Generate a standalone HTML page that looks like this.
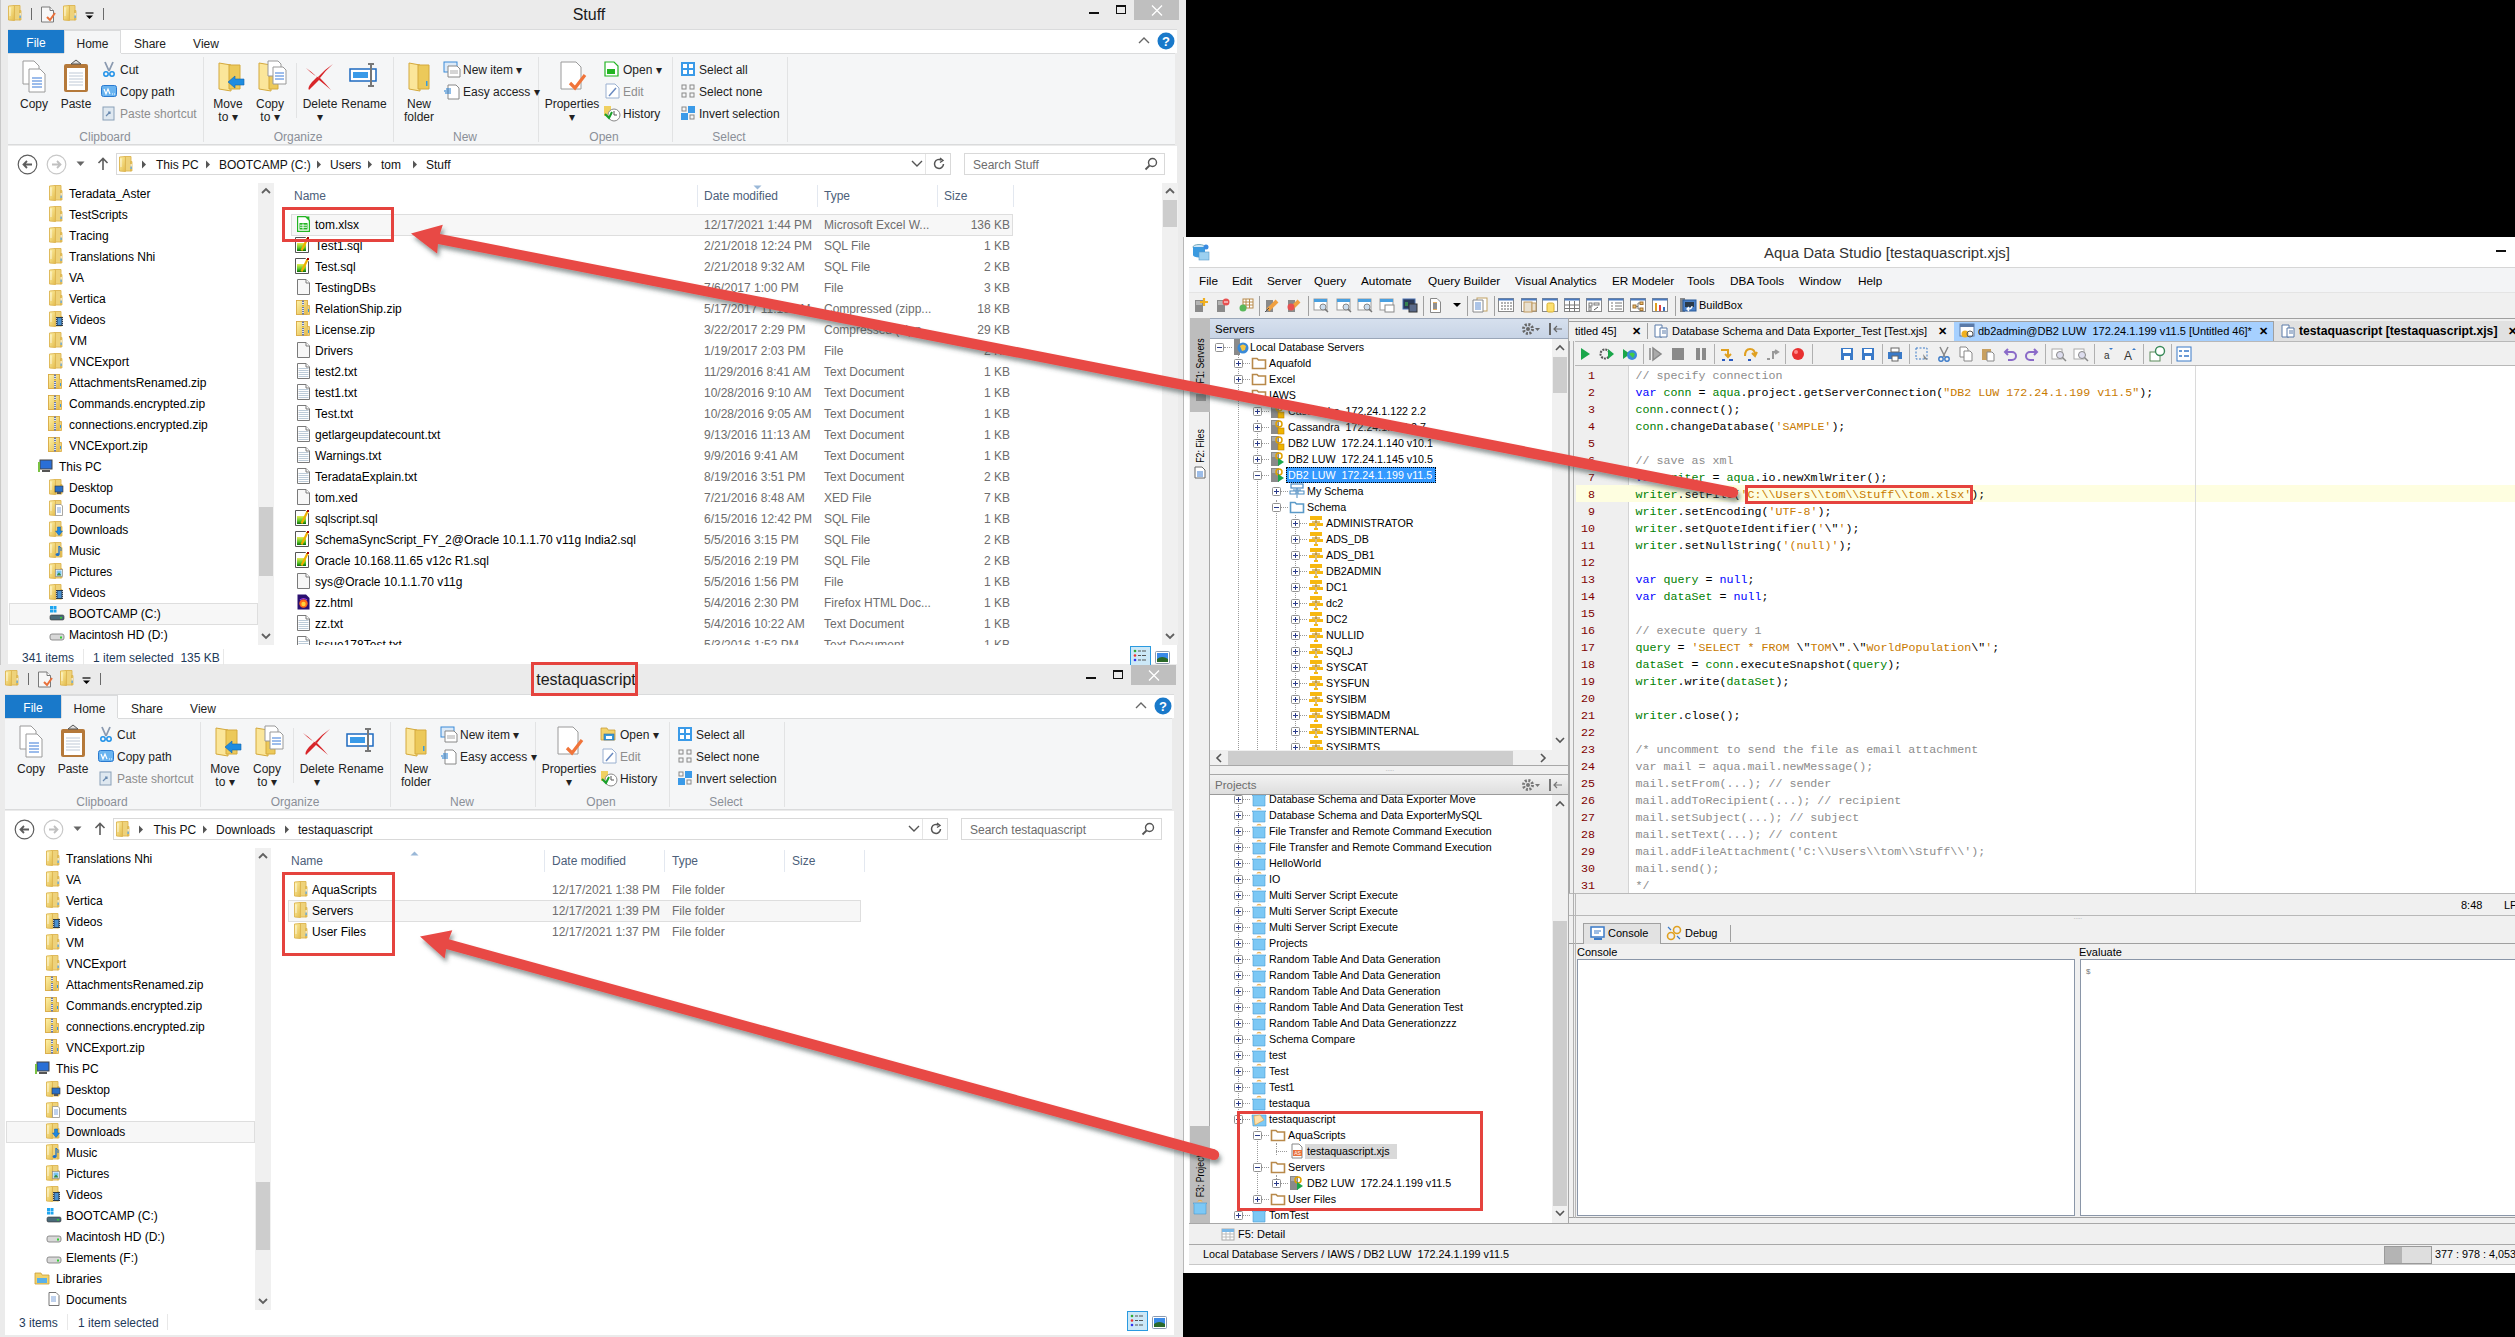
<!DOCTYPE html><html><head><meta charset="utf-8"><style>
html,body{margin:0;padding:0;}
body{width:2515px;height:1337px;overflow:hidden;position:relative;background:#000;font-family:"Liberation Sans",sans-serif;}
body div, body svg{position:absolute;}
.t{white-space:pre;}
svg{overflow:visible;}
</style></head><body>

<svg width="0" height="0" style="position:absolute">
<defs>
<linearGradient id="gfold" x1="0" y1="0" x2="1" y2="1"><stop offset="0" stop-color="#fff3a8"/><stop offset="1" stop-color="#e2b94a"/></linearGradient>
<linearGradient id="gsql" x1="0" y1="0" x2="0" y2="1"><stop offset="0" stop-color="#e8ec50"/><stop offset="0.6" stop-color="#5cc82a"/><stop offset="1" stop-color="#0a6a0a"/></linearGradient>
<symbol id="efoldb" viewBox="0 0 16 16" overflow="visible"><path d="M5.5 0.5 H12 V15 H5.5 Z" fill="#eed27a" stroke="#dcb450" stroke-width="0.9"/><path d="M11.5 5.5 H13 V15 H11.5 Z" fill="#e6c456" stroke="#dcb450" stroke-width="0.8"/><path d="M0.5 1 L6.5 0.5 V15.5 L0.5 15 Z" fill="url(#gfold)" stroke="#dcb450" stroke-width="0.9"/><path d="M2 2.5 V11" stroke="#fff" stroke-width="0.9" opacity="0.8"/></symbol>
<symbol id="efold" viewBox="0 0 16 16" overflow="visible"><use href="#efoldb"/><rect x="11.6" y="8" width="1" height="5" fill="#fff"/><rect x="11.6" y="10.5" width="1" height="2.5" fill="#2a8ad8"/></symbol>
<symbol id="fdesk" viewBox="0 0 16 16" overflow="visible"><use href="#efoldb"/><rect x="6" y="7" width="8" height="6" fill="#2a70c8" stroke="#333" stroke-width="0.6"/><rect x="8" y="13" width="4" height="2" fill="#555"/></symbol>
<symbol id="fdocs" viewBox="0 0 16 16" overflow="visible"><use href="#efoldb"/><path d="M6.5 4.5 H12 L13.5 6 V15.5 H6.5 Z" fill="#fff" stroke="#888" stroke-width="0.7"/><path d="M8 8h4M8 10h4M8 12h4" stroke="#5a8ad0" stroke-width="0.8"/></symbol>
<symbol id="fdl" viewBox="0 0 16 16" overflow="visible"><use href="#efoldb"/><path d="M8.5 6 H11.5 V10 H13.5 L10 14.5 L6.5 10 H8.5 Z" fill="#1e88e0" stroke="#0f5aa8" stroke-width="0.5"/></symbol>
<symbol id="fmusic" viewBox="0 0 16 16" overflow="visible"><use href="#efoldb"/><path d="M10 4 V12" stroke="#1e70c8" stroke-width="1.3"/><ellipse cx="8.6" cy="12.5" rx="2" ry="1.6" fill="#1e70c8"/><path d="M10 4 Q13 6 12 9" stroke="#1e70c8" fill="none"/></symbol>
<symbol id="fpics" viewBox="0 0 16 16" overflow="visible"><use href="#efoldb"/><rect x="6.5" y="6.5" width="7" height="7" fill="#fff" stroke="#888" stroke-width="0.7"/><rect x="7.5" y="7.5" width="5" height="5" fill="#7ac4f0"/><path d="M7.5 12.5 L10 9.5 L12.5 12.5 Z" fill="#3a8a3a"/></symbol>
<symbol id="fvid" viewBox="0 0 16 16" overflow="visible"><use href="#efoldb"/><rect x="7" y="6" width="7" height="9" fill="#2a3a4a"/><rect x="8.5" y="7" width="4" height="7" fill="#4a90d0"/><path d="M7.5 7v7M13.5 7v7" stroke="#ddd" stroke-width="0.8" stroke-dasharray="1 1"/></symbol>
<symbol id="ezip" viewBox="0 0 16 16" overflow="visible"><rect x="-0.5" y="0.5" width="11" height="14" fill="url(#gfold)" stroke="#d8a840" stroke-width="0.9"/><path d="M10.5 5.5 H12.5 V14.5 H10.5" fill="#f0d27a" stroke="#d8a840" stroke-width="0.8"/><rect x="11" y="9" width="1" height="3" fill="#3a9ad9"/><rect x="5" y="0.5" width="2" height="14" fill="#6a7aa8"/><path d="M5 2.5h2M5 4.5h2M5 6.5h2M5 8.5h2M5 10.5h2M5 12.5h2" stroke="#fff" stroke-width="0.8"/><circle cx="6" cy="6" r="0.9" fill="#f0c020"/></symbol>
<symbol id="efile" viewBox="0 0 16 16" overflow="visible"><path d="M0.5 0.5 H9 L12.5 4 V15.5 H0.5 Z" fill="#f7f7f7" stroke="#7a7a7a"/><path d="M9 0.5 V4 H12.5" fill="#fff" stroke="#7a7a7a"/></symbol>
<symbol id="etxt" viewBox="0 0 16 16" overflow="visible"><path d="M0.5 0.5 H9 L12.5 4 V15.5 H0.5 Z" fill="#fff" stroke="#7a7a7a"/><path d="M9 0.5 V4 H12.5" fill="#fff" stroke="#7a7a7a"/><path d="M1.5 5.5h10M1.5 7.5h10M1.5 9.5h10M1.5 11.5h10M1.5 13.5h10" stroke="#bccbd8"/></symbol>
<symbol id="esql" viewBox="0 0 16 16" overflow="visible"><path d="M-1.5 0.5 H8.5 L11.5 3.5 V15.5 H-1.5 Z" fill="#fff" stroke="#555"/><rect x="0" y="6" width="9" height="8" fill="url(#gsql)"/><path d="M4.5 13.5 L10.5 1.5" stroke="#f0b000" stroke-width="2.2"/><rect x="10" y="0" width="2" height="2" fill="#a00"/></symbol>
<symbol id="exlsx" viewBox="0 0 16 16" overflow="visible"><path d="M0.6 0.6 H8.5 L12.4 4.5 V15.4 H0.6 Z" fill="#fff" stroke="#22b422" stroke-width="1.2"/><path d="M8.5 0.6 L12.4 0.6 L12.4 4.5 Z" fill="#22b422"/><rect x="2.5" y="7" width="8" height="6.5" fill="#22b422"/><path d="M3 9.2h7M3 11.3h7M6 7.5v6" stroke="#fff" stroke-width="0.9"/></symbol>
<symbol id="ehtml" viewBox="0 0 16 16" overflow="visible"><path d="M0.5 0.5 H9 L12.5 4 V15.5 H0.5 Z" fill="#2a1070"/><circle cx="6.5" cy="9.5" r="4.2" fill="#ff6a1a"/><circle cx="6.5" cy="10" r="2.2" fill="#ffd23a"/><path d="M3 6 Q6.5 3 10 6" stroke="#a040e0" stroke-width="1.2" fill="none"/></symbol>
<symbol id="epc" viewBox="0 0 16 16"><rect x="3" y="2" width="12" height="9" fill="#2a6fd6" stroke="#444" stroke-width="1"/><rect x="1" y="4" width="2" height="10" fill="#7ac142"/><rect x="5" y="12" width="8" height="2" fill="#555"/></symbol>
<symbol id="edrivec" viewBox="0 0 16 16"><rect x="1" y="1" width="3" height="3" fill="#1ea5f0"/><rect x="4.5" y="1" width="3" height="3" fill="#1ea5f0"/><rect x="1" y="4.5" width="3" height="3" fill="#1ea5f0"/><rect x="4.5" y="4.5" width="3" height="3" fill="#1ea5f0"/><rect x="1" y="10" width="14" height="5" rx="1.5" fill="#4a6a7a" stroke="#333" stroke-width="0.6"/><rect x="11" y="12" width="2" height="1.5" fill="#3c3"/></symbol>
<symbol id="edrive" viewBox="0 0 16 16"><rect x="1" y="8" width="14" height="6" rx="2" fill="#d8d8d8" stroke="#777" stroke-width="0.8"/><rect x="11" y="10.5" width="2" height="2" fill="#3c3"/></symbol>
<symbol id="elib" viewBox="0 0 16 16"><path d="M1 3 H7 L8 5 H15 V14 H1 Z" fill="#f3d36b" stroke="#c9a03a" stroke-width="0.8"/><rect x="3" y="8" width="10" height="5" fill="#5ab0e8"/></symbol>
<symbol id="ldoc" viewBox="0 0 16 16"><path d="M3 1.5 H10 L13 4.5 V14.5 H3 Z" fill="#fff" stroke="#666" stroke-width="0.9"/><path d="M5 6h5M5 8h5M5 10h5" stroke="#5a8ad0" stroke-width="0.8"/></symbol>
<symbol id="afold" viewBox="0 0 16 16"><path d="M1.5 3.5 H6 L7.5 5 H14.5 V13.5 H1.5 Z" fill="#fff" stroke="#b8894a" stroke-width="1.6"/></symbol>
<symbol id="afoldb" viewBox="0 0 16 16"><path d="M1.5 3.5 H6 L7.5 5 H14.5 V13.5 H1.5 Z" fill="#fff" stroke="#5b9ac8" stroke-width="1.6"/></symbol>
<symbol id="pfold" viewBox="0 0 16 16"><path d="M6 2.5 a2 1.2 0 0 1 4 0" fill="#ffd27a" stroke="#e0a040" stroke-width="0.8"/><path d="M1 4 H15 L14 5 V15 H2 V5 Z" fill="#7cc8f5" stroke="#4a9ad0" stroke-width="0.6"/></symbol>
<symbol id="pfoldo" viewBox="0 0 16 16"><path d="M1 4 H15 V15 H2 Z" fill="#7cc8f5" stroke="#4a9ad0" stroke-width="0.6"/><path d="M3 5 L9 4 L13 9 L4 14 Z" fill="#ffe0a8" stroke="#e0a040" stroke-width="0.6"/></symbol>
<symbol id="srv" viewBox="0 0 16 16"><rect x="1" y="1" width="8" height="14" fill="#8a8a8a"/><path d="M2 3h6M2 5h6" stroke="#ddd" stroke-width="0.8"/><circle cx="9" cy="5" r="3" fill="none" stroke="#e0a000" stroke-width="1.5"/><rect x="8" y="9" width="6" height="6" fill="#f0b400" stroke="#c08000" stroke-width="0.6"/></symbol>
<symbol id="srvg" viewBox="0 0 16 16"><rect x="1" y="1" width="8" height="14" fill="#8a8a8a"/><path d="M2 3h6M2 5h6" stroke="#ddd" stroke-width="0.8"/><circle cx="9" cy="5" r="3" fill="none" stroke="#e0a000" stroke-width="1.5"/><path d="M8 7 L14 11 L8 15 Z" fill="#1aa64a"/></symbol>
<symbol id="globe" viewBox="0 0 16 16"><rect x="1" y="0" width="6" height="16" fill="#8a8a8a"/><circle cx="10" cy="9" r="5.5" fill="#3a8ad8"/><path d="M7 7 Q10 4 13 7 L12 11 L9 12 Z" fill="#f5c542"/></symbol>
<symbol id="schm" viewBox="0 0 16 16"><rect x="2" y="1" width="12" height="4" fill="#f7b80f"/><rect x="1" y="8" width="6" height="3" fill="#f7b80f"/><rect x="9" y="8" width="6" height="3" fill="#f7b80f"/><path d="M8 5v10M4 7h8" stroke="#b07a00" stroke-width="1"/><rect x="6" y="13" width="4" height="2" fill="#f7b80f"/></symbol>
<symbol id="schmb" viewBox="0 0 16 16"><rect x="2" y="1" width="12" height="4" fill="none" stroke="#4a8ac0" stroke-width="1.2"/><rect x="1" y="8" width="6" height="3" fill="none" stroke="#4a8ac0"/><rect x="9" y="8" width="6" height="3" fill="none" stroke="#4a8ac0"/><path d="M8 5v10M4 7h8" stroke="#4a8ac0" stroke-width="1"/></symbol>
<symbol id="xplus" viewBox="0 0 9 9"><rect x="0.5" y="0.5" width="8" height="8" rx="1" fill="#fff" stroke="#919191"/><path d="M2 4.5h5M4.5 2v5" stroke="#2a3a8a" stroke-width="1"/></symbol>
<symbol id="xminus" viewBox="0 0 9 9"><rect x="0.5" y="0.5" width="8" height="8" rx="1" fill="#fff" stroke="#919191"/><path d="M2 4.5h5" stroke="#2a3a8a" stroke-width="1"/></symbol>
<symbol id="tbg" viewBox="0 0 16 16"><rect x="2" y="2" width="12" height="12" fill="#e8e8e8" stroke="#8a8a8a"/><path d="M4 6h8M4 9h8" stroke="#5a8ad0"/></symbol>
<filter id="shad" x="-20%" y="-20%" width="140%" height="160%"><feGaussianBlur in="SourceAlpha" stdDeviation="2.2"/><feOffset dx="2" dy="4" result="o"/><feFlood flood-color="#3a4a4a" flood-opacity="0.55"/><feComposite in2="o" operator="in"/><feMerge><feMergeNode/><feMergeNode in="SourceGraphic"/></feMerge></filter>
</defs></svg>

<div style="left:0px;top:0px;width:1186px;height:665px;background:#ebebeb;"></div>
<div style="left:0px;top:0px;width:1px;height:665px;background:#c9c9c9;"></div>
<div class="t" style="left:289px;width:600px;text-align:center;top:4.0px;line-height:22px;font-size:16px;color:#1a1a1a;">Stuff</div>
<svg style="left:8px;top:5px" width="16" height="16"><use href="#efold"/></svg>
<div style="left:31px;top:8px;width:1px;height:12px;background:#6a6a6a;"></div>
<svg style="left:41px;top:6px" width="16" height="17"><use href="#efile"/></svg>
<svg style="left:46px;top:12px;" width="10" height="10" viewBox="0 0 10 10"><path d="M1 5 L4 8 L9 1" stroke="#e8703a" stroke-width="2" fill="none"/></svg>
<svg style="left:63px;top:5px" width="16" height="16"><use href="#efold"/></svg>
<svg style="left:85px;top:12px;" width="9" height="8" viewBox="0 0 9 8"><path d="M0.5 1h8" stroke="#000" stroke-width="1.2"/><path d="M1 3.5 L8 3.5 L4.5 7 Z" fill="#000"/></svg>
<div style="left:103px;top:8px;width:1px;height:12px;background:#6a6a6a;"></div>
<div style="left:1089px;top:12px;width:10px;height:2px;background:#111;"></div>
<div style="left:1116px;top:5px;width:10px;height:9px;border:1.5px solid #111;border-top-width:2px;box-sizing:border-box;"></div>
<div style="left:1134px;top:0px;width:45px;height:20px;background:#bfbfbf;"></div>
<svg style="left:1151px;top:5px;" width="12" height="11" viewBox="0 0 12 11"><path d="M1 0.5 L11 10.5 M11 0.5 L1 10.5" stroke="#fff" stroke-width="1.3"/></svg>
<div style="left:8px;top:29px;width:1169px;height:24px;background:#fff;border-top:1px solid #dadbdc;box-sizing:border-box;"></div>
<div style="left:8px;top:30px;width:56px;height:23px;background:#1979ca;"></div>
<div class="t" style="left:-264px;width:600px;text-align:center;top:34.5px;line-height:17px;font-size:12px;color:#fff;">File</div>
<div style="left:64px;top:30px;width:57px;height:24px;background:#f5f6f7;border:1px solid #dadbdc;border-bottom:none;box-sizing:border-box;"></div>
<div class="t" style="left:-207.5px;width:600px;text-align:center;top:35.5px;line-height:17px;font-size:12px;color:#222;">Home</div>
<div class="t" style="left:-150px;width:600px;text-align:center;top:35.5px;line-height:17px;font-size:12px;color:#222;">Share</div>
<div class="t" style="left:-94px;width:600px;text-align:center;top:35.5px;line-height:17px;font-size:12px;color:#222;">View</div>
<svg style="left:1138px;top:36px;" width="12" height="8" viewBox="0 0 12 8"><path d="M1 7 L6 2 L11 7" stroke="#666" stroke-width="1.4" fill="none"/></svg>
<svg style="left:1157px;top:32px;" width="18" height="18" viewBox="0 0 18 18"><circle cx="9" cy="9" r="8.5" fill="#1979ca"/><text x="9" y="14" font-size="13" font-weight="bold" text-anchor="middle" fill="#fff" font-family="Liberation Sans">?</text></svg>
<div style="left:8px;top:53px;width:1167px;height:92px;background:#f5f6f7;border-top:1px solid #dadbdc;border-bottom:1px solid #dadbdc;box-sizing:border-box;"></div>
<div style="left:64px;top:53px;width:57px;height:1px;background:#f5f6f7;"></div>
<div style="left:203px;top:57px;width:1px;height:85px;background:#e2e3e4;"></div>
<div style="left:393px;top:57px;width:1px;height:85px;background:#e2e3e4;"></div>
<div style="left:538px;top:57px;width:1px;height:85px;background:#e2e3e4;"></div>
<div style="left:672px;top:57px;width:1px;height:85px;background:#e2e3e4;"></div>
<div style="left:787px;top:57px;width:1px;height:85px;background:#e2e3e4;"></div>
<div style="left:296px;top:63px;width:1px;height:55px;background:#e2e3e4;"></div>
<div class="t" style="left:-195px;width:600px;text-align:center;top:128.5px;line-height:17px;font-size:12px;color:#8a8f98;">Clipboard</div>
<div class="t" style="left:-2px;width:600px;text-align:center;top:128.5px;line-height:17px;font-size:12px;color:#8a8f98;">Organize</div>
<div class="t" style="left:165px;width:600px;text-align:center;top:128.5px;line-height:17px;font-size:12px;color:#8a8f98;">New</div>
<div class="t" style="left:304px;width:600px;text-align:center;top:128.5px;line-height:17px;font-size:12px;color:#8a8f98;">Open</div>
<div class="t" style="left:429px;width:600px;text-align:center;top:128.5px;line-height:17px;font-size:12px;color:#8a8f98;">Select</div>
<svg style="left:20px;top:60px;" width="30" height="34" viewBox="0 0 30 34"><path d="M3 1 H14 L19 6 V24 H3 Z" fill="#fff" stroke="#9a9a9a"/><path d="M9 9 H20 L25 14 V32 H9 Z" fill="#fff" stroke="#9a9a9a"/><path d="M12 18h10M12 21h10M12 24h10M12 27h10" stroke="#3a7ad8" stroke-width="1.2"/></svg>
<div class="t" style="left:-266px;width:600px;text-align:center;top:95.5px;line-height:17px;font-size:12px;color:#222;">Copy</div>
<svg style="left:62px;top:60px;" width="30" height="34" viewBox="0 0 30 34"><rect x="2" y="4" width="24" height="28" rx="2" fill="#b5793a"/><rect x="5" y="8" width="18" height="22" fill="#fff"/><path d="M7 13h14M7 16h14M7 19h14M7 22h14M7 25h14" stroke="#bfc9d6"/><path d="M9 4 L14 0 L19 4 Z" fill="#ddd" stroke="#555"/></svg>
<div class="t" style="left:-224px;width:600px;text-align:center;top:95.5px;line-height:17px;font-size:12px;color:#222;">Paste</div>
<svg style="left:101px;top:61px;" width="16" height="16" viewBox="0 0 16 16"><path d="M4 1 L8 10 M12 1 L8 10" stroke="#8a9ab0" stroke-width="1.8"/><circle cx="5" cy="13" r="2.2" fill="none" stroke="#1e90e8" stroke-width="1.5"/><circle cx="11" cy="13" r="2.2" fill="none" stroke="#1e90e8" stroke-width="1.5"/></svg>
<div class="t" style="left:120px;top:61.5px;line-height:17px;font-size:12px;color:#222;">Cut</div>
<svg style="left:101px;top:84px;" width="16" height="14" viewBox="0 0 16 14"><rect x="0.5" y="1.5" width="15" height="11" rx="2" fill="#6ab4f0" stroke="#2a7ad0"/><path d="M3 5 L5 10 L7 5 L9 10 M11 10h1M13 10h1" stroke="#fff" stroke-width="1.2" fill="none"/></svg>
<div class="t" style="left:120px;top:83.5px;line-height:17px;font-size:12px;color:#222;">Copy path</div>
<svg style="left:102px;top:105px;" width="14" height="16" viewBox="0 0 14 16"><rect x="1" y="2" width="11" height="13" fill="#dfe8f0" stroke="#8aa0b8"/><path d="M4 11 L8 7 M6 7h2v2" stroke="#6a8ab0" stroke-width="1.2" fill="none"/></svg>
<div class="t" style="left:120px;top:105.5px;line-height:17px;font-size:12px;color:#8d8d8d;">Paste shortcut</div>
<svg style="left:216px;top:60px;" width="32" height="34" viewBox="0 0 32 34"><path d="M3 3 L15 5 V31 L3 29 Z" fill="#fbe69a" stroke="#d4a93c"/><path d="M13 5 H24 V29 H13 Z" fill="#ecc95a" stroke="#d4a93c"/><path d="M12 22 L19 16 V19 H28 V25 H19 V28 Z" fill="#1e8ce0" stroke="#1266b0" stroke-width="0.6"/></svg>
<div class="t" style="left:-72px;width:600px;text-align:center;top:95.5px;line-height:17px;font-size:12px;color:#222;">Move</div>
<div class="t" style="left:-72px;width:600px;text-align:center;top:108.5px;line-height:17px;font-size:12px;color:#222;">to ▾</div>
<svg style="left:256px;top:60px;" width="32" height="34" viewBox="0 0 32 34"><path d="M3 3 L15 5 V31 L3 29 Z" fill="#fbe69a" stroke="#d4a93c"/><path d="M13 5 H22 V29 H13 Z" fill="#ecc95a" stroke="#d4a93c"/><path d="M12 1 H22 L25 4 V16 H12 Z" fill="#fff" stroke="#999"/><path d="M17 7 H27 L30 10 V24 H17 Z" fill="#fff" stroke="#999"/><path d="M19 13h9M19 16h9M19 19h9" stroke="#3a7ad8"/></svg>
<div class="t" style="left:-30px;width:600px;text-align:center;top:95.5px;line-height:17px;font-size:12px;color:#222;">Copy</div>
<div class="t" style="left:-30px;width:600px;text-align:center;top:108.5px;line-height:17px;font-size:12px;color:#222;">to ▾</div>
<svg style="left:304px;top:62px;" width="32" height="30" viewBox="0 0 32 30"><path d="M2 6 Q10 14 16 16 Q22 22 27 28 Q20 22 15 18 Q9 24 5 28 Q3 26 8 20 Q12 16 13 15 Q8 10 2 6Z M29 2 Q20 8 14 15 L16 16 Q22 8 29 2Z" fill="#d8262a"/></svg>
<div class="t" style="left:20px;width:600px;text-align:center;top:95.5px;line-height:17px;font-size:12px;color:#222;">Delete</div>
<div class="t" style="left:20px;width:600px;text-align:center;top:108.5px;line-height:17px;font-size:12px;color:#222;">▾</div>
<svg style="left:348px;top:62px;" width="32" height="30" viewBox="0 0 32 30"><rect x="2" y="7" width="26" height="12" fill="#fff" stroke="#1e6ac0" stroke-width="1.5"/><rect x="5" y="10" width="15" height="6" fill="#3a9ae8"/><path d="M20 2h6M23 2v22M20 24h6" stroke="#777" stroke-width="2"/></svg>
<div class="t" style="left:64px;width:600px;text-align:center;top:95.5px;line-height:17px;font-size:12px;color:#222;">Rename</div>
<svg style="left:406px;top:60px;" width="28" height="34" viewBox="0 0 28 34"><path d="M3 3 L14 5 V31 L3 29 Z" fill="#fbe69a" stroke="#d4a93c"/><path d="M12 5 H23 V29 H12 Z" fill="#ecc95a" stroke="#d4a93c"/><rect x="20" y="21" width="1.5" height="5" fill="#3a9ad9"/></svg>
<div class="t" style="left:119px;width:600px;text-align:center;top:95.5px;line-height:17px;font-size:12px;color:#222;">New</div>
<div class="t" style="left:119px;width:600px;text-align:center;top:108.5px;line-height:17px;font-size:12px;color:#222;">folder</div>
<svg style="left:443px;top:61px;" width="18" height="17" viewBox="0 0 18 17"><rect x="1" y="1" width="13" height="10" fill="#dceaf8" stroke="#3a8ad8"/><path d="M5 5 H14 L17 8 V16 H5 Z" fill="#fff" stroke="#888"/><path d="M7 10h8M7 12h8" stroke="#aaa"/></svg>
<div class="t" style="left:463px;top:61.5px;line-height:17px;font-size:12px;color:#222;">New item ▾</div>
<svg style="left:443px;top:83px;" width="18" height="17" viewBox="0 0 18 17"><path d="M5 2 H13 L16 5 V16 H5 Z" fill="#fff" stroke="#888"/><path d="M1 8h7M3 6h5M2 10h6" stroke="#1e7ad0" stroke-width="1.2"/></svg>
<div class="t" style="left:463px;top:83.5px;line-height:17px;font-size:12px;color:#222;">Easy access ▾</div>
<svg style="left:558px;top:61px;" width="30" height="32" viewBox="0 0 30 32"><path d="M3 1 H18 L23 6 V28 H3 Z" fill="#fff" stroke="#9a9a9a"/><path d="M12 22 L17 27 L27 14" stroke="#f0743a" stroke-width="3.2" fill="none"/></svg>
<div class="t" style="left:272px;width:600px;text-align:center;top:95.5px;line-height:17px;font-size:12px;color:#222;">Properties</div>
<div class="t" style="left:272px;width:600px;text-align:center;top:108.5px;line-height:17px;font-size:12px;color:#222;">▾</div>
<svg style="left:603px;top:61px;" width="16" height="16" viewBox="0 0 16 16"><path d="M2 1 H11 L15 5 V15 H2 Z" fill="#fff" stroke="#22b422" stroke-width="1.2"/><rect x="4" y="8" width="8" height="5" fill="#22b422"/></svg>
<div class="t" style="left:623px;top:61.5px;line-height:17px;font-size:12px;color:#222;">Open ▾</div>
<svg style="left:604px;top:83px;" width="16" height="16" viewBox="0 0 16 16"><path d="M2 1 H11 L15 5 V15 H2 Z" fill="#fff" stroke="#9ab0d0"/><path d="M5 13 L12 5" stroke="#6a8ac0" stroke-width="1.5"/></svg>
<div class="t" style="left:623px;top:83.5px;line-height:17px;font-size:12px;color:#8d8d8d;">Edit</div>
<svg style="left:603px;top:104px;" width="18" height="18" viewBox="0 0 18 18"><path d="M1 2 H8 V12 H1 Z" fill="#f0d060"/><circle cx="11" cy="11" r="6" fill="#fff" stroke="#888"/><path d="M11 7v4h3" stroke="#555" fill="none"/><path d="M2 10 L6 14 L9 8" stroke="#1aa02a" stroke-width="2" fill="none"/></svg>
<div class="t" style="left:623px;top:105.5px;line-height:17px;font-size:12px;color:#222;">History</div>
<svg style="left:680px;top:61px;" width="16" height="16" viewBox="0 0 16 16"><rect x="1" y="1" width="14" height="14" fill="#3a9ae8"/><rect x="3" y="3" width="4" height="4" fill="#fff"/><rect x="9" y="3" width="4" height="4" fill="#fff"/><rect x="3" y="9" width="4" height="4" fill="#fff"/><rect x="9" y="9" width="4" height="4" fill="#fff"/></svg>
<div class="t" style="left:699px;top:61.5px;line-height:17px;font-size:12px;color:#222;">Select all</div>
<svg style="left:680px;top:83px;" width="16" height="16" viewBox="0 0 16 16"><rect x="2" y="2" width="4" height="4" fill="none" stroke="#888"/><rect x="10" y="2" width="4" height="4" fill="none" stroke="#888"/><rect x="2" y="10" width="4" height="4" fill="none" stroke="#888"/><rect x="10" y="10" width="4" height="4" fill="none" stroke="#888"/></svg>
<div class="t" style="left:699px;top:83.5px;line-height:17px;font-size:12px;color:#222;">Select none</div>
<svg style="left:680px;top:105px;" width="16" height="16" viewBox="0 0 16 16"><rect x="2" y="2" width="4" height="4" fill="none" stroke="#888"/><rect x="8" y="1" width="7" height="7" fill="#3a9ae8"/><rect x="1" y="8" width="7" height="7" fill="#3a9ae8"/><rect x="10" y="10" width="4" height="4" fill="none" stroke="#888"/></svg>
<div class="t" style="left:699px;top:105.5px;line-height:17px;font-size:12px;color:#222;">Invert selection</div>
<div style="left:8px;top:146px;width:1169px;height:518px;background:#fff;"></div>
<svg style="left:17px;top:154px;" width="21" height="21" viewBox="0 0 21 21"><circle cx="10.5" cy="10.5" r="9.3" fill="none" stroke="#5d5d5d" stroke-width="1.2"/><path d="M15 10.5 H6.5 M10 7 L6.5 10.5 L10 14" stroke="#5d5d5d" stroke-width="1.8" fill="none"/></svg>
<svg style="left:46px;top:154px;" width="21" height="21" viewBox="0 0 21 21"><circle cx="10.5" cy="10.5" r="9.3" fill="none" stroke="#c8c8c8" stroke-width="1.2"/><path d="M6 10.5 H14.5 M11 7 L14.5 10.5 L11 14" stroke="#c0c0c0" stroke-width="1.8" fill="none"/></svg>
<svg style="left:76px;top:161px;" width="9" height="6" viewBox="0 0 9 6"><path d="M0.5 0.5 L8.5 0.5 L4.5 5 Z" fill="#666"/></svg>
<svg style="left:97px;top:157px;" width="12" height="14" viewBox="0 0 12 14"><path d="M6 13 V2 M1.5 6 L6 1.5 L10.5 6" stroke="#5d5d5d" stroke-width="1.6" fill="none"/></svg>
<div style="left:116px;top:153px;width:835px;height:22px;border:1px solid #d9d9d9;box-sizing:border-box;background:#fff;"></div>
<div style="left:925px;top:154px;width:1px;height:20px;background:#e5e5e5;"></div>
<svg style="left:119px;top:156px" width="16" height="16"><use href="#efold"/></svg>
<svg style="left:141px;top:160px;" width="6" height="9" viewBox="0 0 6 9"><path d="M1 0.5 L5 4.5 L1 8.5 Z" fill="#555"/></svg>
<div class="t" style="left:156px;top:156.5px;line-height:17px;font-size:12px;color:#111;">This PC</div>
<svg style="left:205px;top:160px;" width="6" height="9" viewBox="0 0 6 9"><path d="M1 0.5 L5 4.5 L1 8.5 Z" fill="#555"/></svg>
<div class="t" style="left:219px;top:156.5px;line-height:17px;font-size:12px;color:#111;">BOOTCAMP (C:)</div>
<svg style="left:316px;top:160px;" width="6" height="9" viewBox="0 0 6 9"><path d="M1 0.5 L5 4.5 L1 8.5 Z" fill="#555"/></svg>
<div class="t" style="left:330px;top:156.5px;line-height:17px;font-size:12px;color:#111;">Users</div>
<svg style="left:367px;top:160px;" width="6" height="9" viewBox="0 0 6 9"><path d="M1 0.5 L5 4.5 L1 8.5 Z" fill="#555"/></svg>
<div class="t" style="left:381px;top:156.5px;line-height:17px;font-size:12px;color:#111;">tom</div>
<svg style="left:412px;top:160px;" width="6" height="9" viewBox="0 0 6 9"><path d="M1 0.5 L5 4.5 L1 8.5 Z" fill="#555"/></svg>
<div class="t" style="left:426px;top:156.5px;line-height:17px;font-size:12px;color:#111;">Stuff</div>
<svg style="left:911px;top:160px;" width="12" height="8" viewBox="0 0 12 8"><path d="M1 1 L6 6 L11 1" stroke="#555" stroke-width="1.4" fill="none"/></svg>
<svg style="left:932px;top:157px;" width="14" height="14" viewBox="0 0 14 14"><path d="M11.5 7 A4.5 4.5 0 1 1 9.5 3.2" stroke="#555" stroke-width="1.5" fill="none"/><path d="M8 1 L11 3.5 L8 5.5" stroke="#555" stroke-width="1.4" fill="none"/></svg>
<div style="left:964px;top:153px;width:201px;height:22px;border:1px solid #d9d9d9;box-sizing:border-box;"></div>
<div class="t" style="left:973px;top:156.5px;line-height:17px;font-size:12px;color:#6d6d6d;">Search Stuff</div>
<svg style="left:1144px;top:157px;" width="14" height="14" viewBox="0 0 14 14"><circle cx="8.5" cy="5.5" r="4" fill="none" stroke="#555" stroke-width="1.4"/><path d="M5.5 8.5 L1.5 12.5" stroke="#555" stroke-width="1.8"/></svg>
<div style="left:8px;top:183px;width:250px;height:462px;overflow:hidden;">
<svg style="left:41px;top:2px" width="16" height="16"><use href="#efold"/></svg>
<div class="t" style="left:61px;top:2.5px;line-height:17px;font-size:12px;color:#000;">Teradata_Aster</div>
<svg style="left:41px;top:23px" width="16" height="16"><use href="#efold"/></svg>
<div class="t" style="left:61px;top:23.5px;line-height:17px;font-size:12px;color:#000;">TestScripts</div>
<svg style="left:41px;top:44px" width="16" height="16"><use href="#efold"/></svg>
<div class="t" style="left:61px;top:44.5px;line-height:17px;font-size:12px;color:#000;">Tracing</div>
<svg style="left:41px;top:65px" width="16" height="16"><use href="#efold"/></svg>
<div class="t" style="left:61px;top:65.5px;line-height:17px;font-size:12px;color:#000;">Translations Nhi</div>
<svg style="left:41px;top:86px" width="16" height="16"><use href="#efold"/></svg>
<div class="t" style="left:61px;top:86.5px;line-height:17px;font-size:12px;color:#000;">VA</div>
<svg style="left:41px;top:107px" width="16" height="16"><use href="#efold"/></svg>
<div class="t" style="left:61px;top:107.5px;line-height:17px;font-size:12px;color:#000;">Vertica</div>
<svg style="left:41px;top:128px" width="16" height="16"><use href="#fvid"/></svg>
<div class="t" style="left:61px;top:128.5px;line-height:17px;font-size:12px;color:#000;">Videos</div>
<svg style="left:41px;top:149px" width="16" height="16"><use href="#efold"/></svg>
<div class="t" style="left:61px;top:149.5px;line-height:17px;font-size:12px;color:#000;">VM</div>
<svg style="left:41px;top:170px" width="16" height="16"><use href="#efold"/></svg>
<div class="t" style="left:61px;top:170.5px;line-height:17px;font-size:12px;color:#000;">VNCExport</div>
<svg style="left:41px;top:191px" width="16" height="16"><use href="#ezip"/></svg>
<div class="t" style="left:61px;top:191.5px;line-height:17px;font-size:12px;color:#000;">AttachmentsRenamed.zip</div>
<svg style="left:41px;top:212px" width="16" height="16"><use href="#ezip"/></svg>
<div class="t" style="left:61px;top:212.5px;line-height:17px;font-size:12px;color:#000;">Commands.encrypted.zip</div>
<svg style="left:41px;top:233px" width="16" height="16"><use href="#ezip"/></svg>
<div class="t" style="left:61px;top:233.5px;line-height:17px;font-size:12px;color:#000;">connections.encrypted.zip</div>
<svg style="left:41px;top:254px" width="16" height="16"><use href="#ezip"/></svg>
<div class="t" style="left:61px;top:254.5px;line-height:17px;font-size:12px;color:#000;">VNCExport.zip</div>
<svg style="left:29px;top:275px" width="16" height="16"><use href="#epc"/></svg>
<div class="t" style="left:51px;top:275.5px;line-height:17px;font-size:12px;color:#000;">This PC</div>
<svg style="left:41px;top:296px" width="16" height="16"><use href="#fdesk"/></svg>
<div class="t" style="left:61px;top:296.5px;line-height:17px;font-size:12px;color:#000;">Desktop</div>
<svg style="left:41px;top:317px" width="16" height="16"><use href="#fdocs"/></svg>
<div class="t" style="left:61px;top:317.5px;line-height:17px;font-size:12px;color:#000;">Documents</div>
<svg style="left:41px;top:338px" width="16" height="16"><use href="#fdl"/></svg>
<div class="t" style="left:61px;top:338.5px;line-height:17px;font-size:12px;color:#000;">Downloads</div>
<svg style="left:41px;top:359px" width="16" height="16"><use href="#fmusic"/></svg>
<div class="t" style="left:61px;top:359.5px;line-height:17px;font-size:12px;color:#000;">Music</div>
<svg style="left:41px;top:380px" width="16" height="16"><use href="#fpics"/></svg>
<div class="t" style="left:61px;top:380.5px;line-height:17px;font-size:12px;color:#000;">Pictures</div>
<svg style="left:41px;top:401px" width="16" height="16"><use href="#fvid"/></svg>
<div class="t" style="left:61px;top:401.5px;line-height:17px;font-size:12px;color:#000;">Videos</div>
<div style="left:1px;top:420px;width:249px;height:22px;background:#f7f7f7;border:1px solid #dedede;box-sizing:border-box;"></div>
<svg style="left:41px;top:422px" width="16" height="16"><use href="#edrivec"/></svg>
<div class="t" style="left:61px;top:422.5px;line-height:17px;font-size:12px;color:#000;">BOOTCAMP (C:)</div>
<svg style="left:41px;top:443px" width="16" height="16"><use href="#edrive"/></svg>
<div class="t" style="left:61px;top:443.5px;line-height:17px;font-size:12px;color:#000;">Macintosh HD (D:)</div>
</div>
<div style="left:258px;top:183px;width:16px;height:462px;background:#f0f0f0;"></div>
<svg style="left:261px;top:187px;" width="10" height="7" viewBox="0 0 10 7"><path d="M1 6 L5 2 L9 6" stroke="#606060" stroke-width="1.8" fill="none"/></svg>
<svg style="left:261px;top:633px;" width="10" height="7" viewBox="0 0 10 7"><path d="M1 1 L5 5 L9 1" stroke="#606060" stroke-width="1.8" fill="none"/></svg>
<div style="left:259px;top:507px;width:14px;height:69px;background:#cdcdcd;"></div>
<div class="t" style="left:294px;top:187.5px;line-height:17px;font-size:12px;color:#4c607a;">Name</div>
<div class="t" style="left:704px;top:187.5px;line-height:17px;font-size:12px;color:#4c607a;">Date modified</div>
<div class="t" style="left:824px;top:187.5px;line-height:17px;font-size:12px;color:#4c607a;">Type</div>
<div class="t" style="left:944px;top:187.5px;line-height:17px;font-size:12px;color:#4c607a;">Size</div>
<div style="left:697px;top:185px;width:1px;height:22px;background:#e3e8f0;"></div>
<div style="left:817px;top:185px;width:1px;height:22px;background:#e3e8f0;"></div>
<div style="left:937px;top:185px;width:1px;height:22px;background:#e3e8f0;"></div>
<div style="left:1013px;top:185px;width:1px;height:22px;background:#e3e8f0;"></div>
<svg style="left:753px;top:185px;" width="9" height="5" viewBox="0 0 9 5"><path d="M0.5 0.5 L8.5 0.5 L4.5 4.5 Z" fill="#9ab8d8"/></svg>
<div style="left:275px;top:208px;width:887px;height:437px;overflow:hidden;">
<div style="left:16px;top:6px;width:722px;height:22px;background:#f7f7f7;border:1px solid #dedede;box-sizing:border-box;"></div>
<svg style="left:22px;top:8px" width="16" height="16"><use href="#exlsx"/></svg>
<div class="t" style="left:40px;top:8.5px;line-height:17px;font-size:12px;color:#000;">tom.xlsx</div>
<div class="t" style="left:429px;top:8.5px;line-height:17px;font-size:12px;color:#6d6d6d;">12/17/2021 1:44 PM</div>
<div class="t" style="left:549px;top:8.5px;line-height:17px;font-size:12px;color:#6d6d6d;">Microsoft Excel W...</div>
<div class="t" style="left:135px;width:600px;text-align:right;top:8.5px;line-height:17px;font-size:12px;color:#6d6d6d;">136 KB</div>
<svg style="left:22px;top:29px" width="16" height="16"><use href="#esql"/></svg>
<div class="t" style="left:40px;top:29.5px;line-height:17px;font-size:12px;color:#000;">Test1.sql</div>
<div class="t" style="left:429px;top:29.5px;line-height:17px;font-size:12px;color:#6d6d6d;">2/21/2018 12:24 PM</div>
<div class="t" style="left:549px;top:29.5px;line-height:17px;font-size:12px;color:#6d6d6d;">SQL File</div>
<div class="t" style="left:135px;width:600px;text-align:right;top:29.5px;line-height:17px;font-size:12px;color:#6d6d6d;">1 KB</div>
<svg style="left:22px;top:50px" width="16" height="16"><use href="#esql"/></svg>
<div class="t" style="left:40px;top:50.5px;line-height:17px;font-size:12px;color:#000;">Test.sql</div>
<div class="t" style="left:429px;top:50.5px;line-height:17px;font-size:12px;color:#6d6d6d;">2/21/2018 9:32 AM</div>
<div class="t" style="left:549px;top:50.5px;line-height:17px;font-size:12px;color:#6d6d6d;">SQL File</div>
<div class="t" style="left:135px;width:600px;text-align:right;top:50.5px;line-height:17px;font-size:12px;color:#6d6d6d;">2 KB</div>
<svg style="left:22px;top:71px" width="16" height="16"><use href="#efile"/></svg>
<div class="t" style="left:40px;top:71.5px;line-height:17px;font-size:12px;color:#000;">TestingDBs</div>
<div class="t" style="left:429px;top:71.5px;line-height:17px;font-size:12px;color:#6d6d6d;">7/6/2017 1:00 PM</div>
<div class="t" style="left:549px;top:71.5px;line-height:17px;font-size:12px;color:#6d6d6d;">File</div>
<div class="t" style="left:135px;width:600px;text-align:right;top:71.5px;line-height:17px;font-size:12px;color:#6d6d6d;">3 KB</div>
<svg style="left:22px;top:92px" width="16" height="16"><use href="#ezip"/></svg>
<div class="t" style="left:40px;top:92.5px;line-height:17px;font-size:12px;color:#000;">RelationShip.zip</div>
<div class="t" style="left:429px;top:92.5px;line-height:17px;font-size:12px;color:#6d6d6d;">5/17/2017 11:15 AM</div>
<div class="t" style="left:549px;top:92.5px;line-height:17px;font-size:12px;color:#6d6d6d;">Compressed (zipp...</div>
<div class="t" style="left:135px;width:600px;text-align:right;top:92.5px;line-height:17px;font-size:12px;color:#6d6d6d;">18 KB</div>
<svg style="left:22px;top:113px" width="16" height="16"><use href="#ezip"/></svg>
<div class="t" style="left:40px;top:113.5px;line-height:17px;font-size:12px;color:#000;">License.zip</div>
<div class="t" style="left:429px;top:113.5px;line-height:17px;font-size:12px;color:#6d6d6d;">3/22/2017 2:29 PM</div>
<div class="t" style="left:549px;top:113.5px;line-height:17px;font-size:12px;color:#6d6d6d;">Compressed (zipp...</div>
<div class="t" style="left:135px;width:600px;text-align:right;top:113.5px;line-height:17px;font-size:12px;color:#6d6d6d;">29 KB</div>
<svg style="left:22px;top:134px" width="16" height="16"><use href="#efile"/></svg>
<div class="t" style="left:40px;top:134.5px;line-height:17px;font-size:12px;color:#000;">Drivers</div>
<div class="t" style="left:429px;top:134.5px;line-height:17px;font-size:12px;color:#6d6d6d;">1/19/2017 2:03 PM</div>
<div class="t" style="left:549px;top:134.5px;line-height:17px;font-size:12px;color:#6d6d6d;">File</div>
<div class="t" style="left:135px;width:600px;text-align:right;top:134.5px;line-height:17px;font-size:12px;color:#6d6d6d;">2 KB</div>
<svg style="left:22px;top:155px" width="16" height="16"><use href="#etxt"/></svg>
<div class="t" style="left:40px;top:155.5px;line-height:17px;font-size:12px;color:#000;">test2.txt</div>
<div class="t" style="left:429px;top:155.5px;line-height:17px;font-size:12px;color:#6d6d6d;">11/29/2016 8:41 AM</div>
<div class="t" style="left:549px;top:155.5px;line-height:17px;font-size:12px;color:#6d6d6d;">Text Document</div>
<div class="t" style="left:135px;width:600px;text-align:right;top:155.5px;line-height:17px;font-size:12px;color:#6d6d6d;">1 KB</div>
<svg style="left:22px;top:176px" width="16" height="16"><use href="#etxt"/></svg>
<div class="t" style="left:40px;top:176.5px;line-height:17px;font-size:12px;color:#000;">test1.txt</div>
<div class="t" style="left:429px;top:176.5px;line-height:17px;font-size:12px;color:#6d6d6d;">10/28/2016 9:10 AM</div>
<div class="t" style="left:549px;top:176.5px;line-height:17px;font-size:12px;color:#6d6d6d;">Text Document</div>
<div class="t" style="left:135px;width:600px;text-align:right;top:176.5px;line-height:17px;font-size:12px;color:#6d6d6d;">1 KB</div>
<svg style="left:22px;top:197px" width="16" height="16"><use href="#etxt"/></svg>
<div class="t" style="left:40px;top:197.5px;line-height:17px;font-size:12px;color:#000;">Test.txt</div>
<div class="t" style="left:429px;top:197.5px;line-height:17px;font-size:12px;color:#6d6d6d;">10/28/2016 9:05 AM</div>
<div class="t" style="left:549px;top:197.5px;line-height:17px;font-size:12px;color:#6d6d6d;">Text Document</div>
<div class="t" style="left:135px;width:600px;text-align:right;top:197.5px;line-height:17px;font-size:12px;color:#6d6d6d;">1 KB</div>
<svg style="left:22px;top:218px" width="16" height="16"><use href="#etxt"/></svg>
<div class="t" style="left:40px;top:218.5px;line-height:17px;font-size:12px;color:#000;">getlargeupdatecount.txt</div>
<div class="t" style="left:429px;top:218.5px;line-height:17px;font-size:12px;color:#6d6d6d;">9/13/2016 11:13 AM</div>
<div class="t" style="left:549px;top:218.5px;line-height:17px;font-size:12px;color:#6d6d6d;">Text Document</div>
<div class="t" style="left:135px;width:600px;text-align:right;top:218.5px;line-height:17px;font-size:12px;color:#6d6d6d;">1 KB</div>
<svg style="left:22px;top:239px" width="16" height="16"><use href="#etxt"/></svg>
<div class="t" style="left:40px;top:239.5px;line-height:17px;font-size:12px;color:#000;">Warnings.txt</div>
<div class="t" style="left:429px;top:239.5px;line-height:17px;font-size:12px;color:#6d6d6d;">9/9/2016 9:41 AM</div>
<div class="t" style="left:549px;top:239.5px;line-height:17px;font-size:12px;color:#6d6d6d;">Text Document</div>
<div class="t" style="left:135px;width:600px;text-align:right;top:239.5px;line-height:17px;font-size:12px;color:#6d6d6d;">1 KB</div>
<svg style="left:22px;top:260px" width="16" height="16"><use href="#etxt"/></svg>
<div class="t" style="left:40px;top:260.5px;line-height:17px;font-size:12px;color:#000;">TeradataExplain.txt</div>
<div class="t" style="left:429px;top:260.5px;line-height:17px;font-size:12px;color:#6d6d6d;">8/19/2016 3:51 PM</div>
<div class="t" style="left:549px;top:260.5px;line-height:17px;font-size:12px;color:#6d6d6d;">Text Document</div>
<div class="t" style="left:135px;width:600px;text-align:right;top:260.5px;line-height:17px;font-size:12px;color:#6d6d6d;">2 KB</div>
<svg style="left:22px;top:281px" width="16" height="16"><use href="#efile"/></svg>
<div class="t" style="left:40px;top:281.5px;line-height:17px;font-size:12px;color:#000;">tom.xed</div>
<div class="t" style="left:429px;top:281.5px;line-height:17px;font-size:12px;color:#6d6d6d;">7/21/2016 8:48 AM</div>
<div class="t" style="left:549px;top:281.5px;line-height:17px;font-size:12px;color:#6d6d6d;">XED File</div>
<div class="t" style="left:135px;width:600px;text-align:right;top:281.5px;line-height:17px;font-size:12px;color:#6d6d6d;">7 KB</div>
<svg style="left:22px;top:302px" width="16" height="16"><use href="#esql"/></svg>
<div class="t" style="left:40px;top:302.5px;line-height:17px;font-size:12px;color:#000;">sqlscript.sql</div>
<div class="t" style="left:429px;top:302.5px;line-height:17px;font-size:12px;color:#6d6d6d;">6/15/2016 12:42 PM</div>
<div class="t" style="left:549px;top:302.5px;line-height:17px;font-size:12px;color:#6d6d6d;">SQL File</div>
<div class="t" style="left:135px;width:600px;text-align:right;top:302.5px;line-height:17px;font-size:12px;color:#6d6d6d;">1 KB</div>
<svg style="left:22px;top:323px" width="16" height="16"><use href="#esql"/></svg>
<div class="t" style="left:40px;top:323.5px;line-height:17px;font-size:12px;color:#000;">SchemaSyncScript_FY_2@Oracle 10.1.1.70 v11g India2.sql</div>
<div class="t" style="left:429px;top:323.5px;line-height:17px;font-size:12px;color:#6d6d6d;">5/5/2016 3:15 PM</div>
<div class="t" style="left:549px;top:323.5px;line-height:17px;font-size:12px;color:#6d6d6d;">SQL File</div>
<div class="t" style="left:135px;width:600px;text-align:right;top:323.5px;line-height:17px;font-size:12px;color:#6d6d6d;">2 KB</div>
<svg style="left:22px;top:344px" width="16" height="16"><use href="#esql"/></svg>
<div class="t" style="left:40px;top:344.5px;line-height:17px;font-size:12px;color:#000;">Oracle 10.168.11.65 v12c R1.sql</div>
<div class="t" style="left:429px;top:344.5px;line-height:17px;font-size:12px;color:#6d6d6d;">5/5/2016 2:19 PM</div>
<div class="t" style="left:549px;top:344.5px;line-height:17px;font-size:12px;color:#6d6d6d;">SQL File</div>
<div class="t" style="left:135px;width:600px;text-align:right;top:344.5px;line-height:17px;font-size:12px;color:#6d6d6d;">2 KB</div>
<svg style="left:22px;top:365px" width="16" height="16"><use href="#efile"/></svg>
<div class="t" style="left:40px;top:365.5px;line-height:17px;font-size:12px;color:#000;">sys@Oracle 10.1.1.70 v11g</div>
<div class="t" style="left:429px;top:365.5px;line-height:17px;font-size:12px;color:#6d6d6d;">5/5/2016 1:56 PM</div>
<div class="t" style="left:549px;top:365.5px;line-height:17px;font-size:12px;color:#6d6d6d;">File</div>
<div class="t" style="left:135px;width:600px;text-align:right;top:365.5px;line-height:17px;font-size:12px;color:#6d6d6d;">1 KB</div>
<svg style="left:22px;top:386px" width="16" height="16"><use href="#ehtml"/></svg>
<div class="t" style="left:40px;top:386.5px;line-height:17px;font-size:12px;color:#000;">zz.html</div>
<div class="t" style="left:429px;top:386.5px;line-height:17px;font-size:12px;color:#6d6d6d;">5/4/2016 2:30 PM</div>
<div class="t" style="left:549px;top:386.5px;line-height:17px;font-size:12px;color:#6d6d6d;">Firefox HTML Doc...</div>
<div class="t" style="left:135px;width:600px;text-align:right;top:386.5px;line-height:17px;font-size:12px;color:#6d6d6d;">1 KB</div>
<svg style="left:22px;top:407px" width="16" height="16"><use href="#etxt"/></svg>
<div class="t" style="left:40px;top:407.5px;line-height:17px;font-size:12px;color:#000;">zz.txt</div>
<div class="t" style="left:429px;top:407.5px;line-height:17px;font-size:12px;color:#6d6d6d;">5/4/2016 10:22 AM</div>
<div class="t" style="left:549px;top:407.5px;line-height:17px;font-size:12px;color:#6d6d6d;">Text Document</div>
<div class="t" style="left:135px;width:600px;text-align:right;top:407.5px;line-height:17px;font-size:12px;color:#6d6d6d;">1 KB</div>
<svg style="left:22px;top:428px" width="16" height="16"><use href="#etxt"/></svg>
<div class="t" style="left:40px;top:428.5px;line-height:17px;font-size:12px;color:#000;">Issue178Test.txt</div>
<div class="t" style="left:429px;top:428.5px;line-height:17px;font-size:12px;color:#6d6d6d;">5/3/2016 1:52 PM</div>
<div class="t" style="left:549px;top:428.5px;line-height:17px;font-size:12px;color:#6d6d6d;">Text Document</div>
<div class="t" style="left:135px;width:600px;text-align:right;top:428.5px;line-height:17px;font-size:12px;color:#6d6d6d;">1 KB</div>
</div>
<div style="left:1162px;top:183px;width:16px;height:462px;background:#f0f0f0;"></div>
<svg style="left:1165px;top:187px;" width="10" height="7" viewBox="0 0 10 7"><path d="M1 6 L5 2 L9 6" stroke="#606060" stroke-width="1.8" fill="none"/></svg>
<svg style="left:1165px;top:633px;" width="10" height="7" viewBox="0 0 10 7"><path d="M1 1 L5 5 L9 1" stroke="#606060" stroke-width="1.8" fill="none"/></svg>
<div style="left:1163px;top:200px;width:14px;height:27px;background:#cdcdcd;"></div>
<div class="t" style="left:22px;top:649.5px;line-height:17px;font-size:12px;color:#1e3a5a;">341 items</div>
<div style="left:83px;top:649px;width:1px;height:16px;background:#e8e8e8;"></div>
<div class="t" style="left:93px;top:649.5px;line-height:17px;font-size:12px;color:#1e3a5a;">1 item selected  135 KB</div>
<div style="left:223px;top:649px;width:1px;height:16px;background:#e8e8e8;"></div>
<svg style="left:1130px;top:646px;" width="21" height="19" viewBox="0 0 21 19"><rect x="0.5" y="0.5" width="20" height="19" fill="#cce8f7" stroke="#2a9ae0"/><circle cx="5" cy="5" r="1.3" fill="#3a3"/><circle cx="5" cy="9.5" r="1.3" fill="#e33"/><circle cx="5" cy="14" r="1.3" fill="#33e"/><path d="M8 5h3M12 5h4M8 9.5h3M12 9.5h4M8 14h3M12 14h4" stroke="#555" stroke-width="1.2"/></svg>
<svg style="left:1155px;top:651px;" width="15" height="13" viewBox="0 0 15 13"><rect x="0.5" y="0.5" width="14" height="12" rx="1" fill="#fff" stroke="#8a9ab0"/><rect x="2" y="2" width="11" height="9" fill="#3a8ae8"/><path d="M2 8 Q7 4 13 8 V11 H2 Z" fill="#2a6a2a"/></svg>
<div style="left:-3px;top:665px;width:1186px;height:672px;background:#ebebeb;"></div>
<div style="left:-3px;top:665px;width:1px;height:672px;background:#c9c9c9;"></div>
<div class="t" style="left:286px;width:600px;text-align:center;top:669.0px;line-height:22px;font-size:16px;color:#1a1a1a;">testaquascript</div>
<svg style="left:5px;top:670px" width="16" height="16"><use href="#efold"/></svg>
<div style="left:28px;top:673px;width:1px;height:12px;background:#6a6a6a;"></div>
<svg style="left:38px;top:671px" width="16" height="17"><use href="#efile"/></svg>
<svg style="left:43px;top:677px;" width="10" height="10" viewBox="0 0 10 10"><path d="M1 5 L4 8 L9 1" stroke="#e8703a" stroke-width="2" fill="none"/></svg>
<svg style="left:60px;top:670px" width="16" height="16"><use href="#efold"/></svg>
<svg style="left:82px;top:677px;" width="9" height="8" viewBox="0 0 9 8"><path d="M0.5 1h8" stroke="#000" stroke-width="1.2"/><path d="M1 3.5 L8 3.5 L4.5 7 Z" fill="#000"/></svg>
<div style="left:100px;top:673px;width:1px;height:12px;background:#6a6a6a;"></div>
<div style="left:1086px;top:677px;width:10px;height:2px;background:#111;"></div>
<div style="left:1113px;top:670px;width:10px;height:9px;border:1.5px solid #111;border-top-width:2px;box-sizing:border-box;"></div>
<div style="left:1131px;top:665px;width:45px;height:20px;background:#bfbfbf;"></div>
<svg style="left:1148px;top:670px;" width="12" height="11" viewBox="0 0 12 11"><path d="M1 0.5 L11 10.5 M11 0.5 L1 10.5" stroke="#fff" stroke-width="1.3"/></svg>
<div style="left:5px;top:694px;width:1169px;height:24px;background:#fff;border-top:1px solid #dadbdc;box-sizing:border-box;"></div>
<div style="left:5px;top:695px;width:56px;height:23px;background:#1979ca;"></div>
<div class="t" style="left:-267px;width:600px;text-align:center;top:699.5px;line-height:17px;font-size:12px;color:#fff;">File</div>
<div style="left:61px;top:695px;width:57px;height:24px;background:#f5f6f7;border:1px solid #dadbdc;border-bottom:none;box-sizing:border-box;"></div>
<div class="t" style="left:-210.5px;width:600px;text-align:center;top:700.5px;line-height:17px;font-size:12px;color:#222;">Home</div>
<div class="t" style="left:-153px;width:600px;text-align:center;top:700.5px;line-height:17px;font-size:12px;color:#222;">Share</div>
<div class="t" style="left:-97px;width:600px;text-align:center;top:700.5px;line-height:17px;font-size:12px;color:#222;">View</div>
<svg style="left:1135px;top:701px;" width="12" height="8" viewBox="0 0 12 8"><path d="M1 7 L6 2 L11 7" stroke="#666" stroke-width="1.4" fill="none"/></svg>
<svg style="left:1154px;top:697px;" width="18" height="18" viewBox="0 0 18 18"><circle cx="9" cy="9" r="8.5" fill="#1979ca"/><text x="9" y="14" font-size="13" font-weight="bold" text-anchor="middle" fill="#fff" font-family="Liberation Sans">?</text></svg>
<div style="left:5px;top:718px;width:1167px;height:92px;background:#f5f6f7;border-top:1px solid #dadbdc;border-bottom:1px solid #dadbdc;box-sizing:border-box;"></div>
<div style="left:61px;top:718px;width:57px;height:1px;background:#f5f6f7;"></div>
<div style="left:200px;top:722px;width:1px;height:85px;background:#e2e3e4;"></div>
<div style="left:390px;top:722px;width:1px;height:85px;background:#e2e3e4;"></div>
<div style="left:535px;top:722px;width:1px;height:85px;background:#e2e3e4;"></div>
<div style="left:669px;top:722px;width:1px;height:85px;background:#e2e3e4;"></div>
<div style="left:784px;top:722px;width:1px;height:85px;background:#e2e3e4;"></div>
<div style="left:293px;top:728px;width:1px;height:55px;background:#e2e3e4;"></div>
<div class="t" style="left:-198px;width:600px;text-align:center;top:793.5px;line-height:17px;font-size:12px;color:#8a8f98;">Clipboard</div>
<div class="t" style="left:-5px;width:600px;text-align:center;top:793.5px;line-height:17px;font-size:12px;color:#8a8f98;">Organize</div>
<div class="t" style="left:162px;width:600px;text-align:center;top:793.5px;line-height:17px;font-size:12px;color:#8a8f98;">New</div>
<div class="t" style="left:301px;width:600px;text-align:center;top:793.5px;line-height:17px;font-size:12px;color:#8a8f98;">Open</div>
<div class="t" style="left:426px;width:600px;text-align:center;top:793.5px;line-height:17px;font-size:12px;color:#8a8f98;">Select</div>
<svg style="left:17px;top:725px;" width="30" height="34" viewBox="0 0 30 34"><path d="M3 1 H14 L19 6 V24 H3 Z" fill="#fff" stroke="#9a9a9a"/><path d="M9 9 H20 L25 14 V32 H9 Z" fill="#fff" stroke="#9a9a9a"/><path d="M12 18h10M12 21h10M12 24h10M12 27h10" stroke="#3a7ad8" stroke-width="1.2"/></svg>
<div class="t" style="left:-269px;width:600px;text-align:center;top:760.5px;line-height:17px;font-size:12px;color:#222;">Copy</div>
<svg style="left:59px;top:725px;" width="30" height="34" viewBox="0 0 30 34"><rect x="2" y="4" width="24" height="28" rx="2" fill="#b5793a"/><rect x="5" y="8" width="18" height="22" fill="#fff"/><path d="M7 13h14M7 16h14M7 19h14M7 22h14M7 25h14" stroke="#bfc9d6"/><path d="M9 4 L14 0 L19 4 Z" fill="#ddd" stroke="#555"/></svg>
<div class="t" style="left:-227px;width:600px;text-align:center;top:760.5px;line-height:17px;font-size:12px;color:#222;">Paste</div>
<svg style="left:98px;top:726px;" width="16" height="16" viewBox="0 0 16 16"><path d="M4 1 L8 10 M12 1 L8 10" stroke="#8a9ab0" stroke-width="1.8"/><circle cx="5" cy="13" r="2.2" fill="none" stroke="#1e90e8" stroke-width="1.5"/><circle cx="11" cy="13" r="2.2" fill="none" stroke="#1e90e8" stroke-width="1.5"/></svg>
<div class="t" style="left:117px;top:726.5px;line-height:17px;font-size:12px;color:#222;">Cut</div>
<svg style="left:98px;top:749px;" width="16" height="14" viewBox="0 0 16 14"><rect x="0.5" y="1.5" width="15" height="11" rx="2" fill="#6ab4f0" stroke="#2a7ad0"/><path d="M3 5 L5 10 L7 5 L9 10 M11 10h1M13 10h1" stroke="#fff" stroke-width="1.2" fill="none"/></svg>
<div class="t" style="left:117px;top:748.5px;line-height:17px;font-size:12px;color:#222;">Copy path</div>
<svg style="left:99px;top:770px;" width="14" height="16" viewBox="0 0 14 16"><rect x="1" y="2" width="11" height="13" fill="#dfe8f0" stroke="#8aa0b8"/><path d="M4 11 L8 7 M6 7h2v2" stroke="#6a8ab0" stroke-width="1.2" fill="none"/></svg>
<div class="t" style="left:117px;top:770.5px;line-height:17px;font-size:12px;color:#8d8d8d;">Paste shortcut</div>
<svg style="left:213px;top:725px;" width="32" height="34" viewBox="0 0 32 34"><path d="M3 3 L15 5 V31 L3 29 Z" fill="#fbe69a" stroke="#d4a93c"/><path d="M13 5 H24 V29 H13 Z" fill="#ecc95a" stroke="#d4a93c"/><path d="M12 22 L19 16 V19 H28 V25 H19 V28 Z" fill="#1e8ce0" stroke="#1266b0" stroke-width="0.6"/></svg>
<div class="t" style="left:-75px;width:600px;text-align:center;top:760.5px;line-height:17px;font-size:12px;color:#222;">Move</div>
<div class="t" style="left:-75px;width:600px;text-align:center;top:773.5px;line-height:17px;font-size:12px;color:#222;">to ▾</div>
<svg style="left:253px;top:725px;" width="32" height="34" viewBox="0 0 32 34"><path d="M3 3 L15 5 V31 L3 29 Z" fill="#fbe69a" stroke="#d4a93c"/><path d="M13 5 H22 V29 H13 Z" fill="#ecc95a" stroke="#d4a93c"/><path d="M12 1 H22 L25 4 V16 H12 Z" fill="#fff" stroke="#999"/><path d="M17 7 H27 L30 10 V24 H17 Z" fill="#fff" stroke="#999"/><path d="M19 13h9M19 16h9M19 19h9" stroke="#3a7ad8"/></svg>
<div class="t" style="left:-33px;width:600px;text-align:center;top:760.5px;line-height:17px;font-size:12px;color:#222;">Copy</div>
<div class="t" style="left:-33px;width:600px;text-align:center;top:773.5px;line-height:17px;font-size:12px;color:#222;">to ▾</div>
<svg style="left:301px;top:727px;" width="32" height="30" viewBox="0 0 32 30"><path d="M2 6 Q10 14 16 16 Q22 22 27 28 Q20 22 15 18 Q9 24 5 28 Q3 26 8 20 Q12 16 13 15 Q8 10 2 6Z M29 2 Q20 8 14 15 L16 16 Q22 8 29 2Z" fill="#d8262a"/></svg>
<div class="t" style="left:17px;width:600px;text-align:center;top:760.5px;line-height:17px;font-size:12px;color:#222;">Delete</div>
<div class="t" style="left:17px;width:600px;text-align:center;top:773.5px;line-height:17px;font-size:12px;color:#222;">▾</div>
<svg style="left:345px;top:727px;" width="32" height="30" viewBox="0 0 32 30"><rect x="2" y="7" width="26" height="12" fill="#fff" stroke="#1e6ac0" stroke-width="1.5"/><rect x="5" y="10" width="15" height="6" fill="#3a9ae8"/><path d="M20 2h6M23 2v22M20 24h6" stroke="#777" stroke-width="2"/></svg>
<div class="t" style="left:61px;width:600px;text-align:center;top:760.5px;line-height:17px;font-size:12px;color:#222;">Rename</div>
<svg style="left:403px;top:725px;" width="28" height="34" viewBox="0 0 28 34"><path d="M3 3 L14 5 V31 L3 29 Z" fill="#fbe69a" stroke="#d4a93c"/><path d="M12 5 H23 V29 H12 Z" fill="#ecc95a" stroke="#d4a93c"/><rect x="20" y="21" width="1.5" height="5" fill="#3a9ad9"/></svg>
<div class="t" style="left:116px;width:600px;text-align:center;top:760.5px;line-height:17px;font-size:12px;color:#222;">New</div>
<div class="t" style="left:116px;width:600px;text-align:center;top:773.5px;line-height:17px;font-size:12px;color:#222;">folder</div>
<svg style="left:440px;top:726px;" width="18" height="17" viewBox="0 0 18 17"><rect x="1" y="1" width="13" height="10" fill="#dceaf8" stroke="#3a8ad8"/><path d="M5 5 H14 L17 8 V16 H5 Z" fill="#fff" stroke="#888"/><path d="M7 10h8M7 12h8" stroke="#aaa"/></svg>
<div class="t" style="left:460px;top:726.5px;line-height:17px;font-size:12px;color:#222;">New item ▾</div>
<svg style="left:440px;top:748px;" width="18" height="17" viewBox="0 0 18 17"><path d="M5 2 H13 L16 5 V16 H5 Z" fill="#fff" stroke="#888"/><path d="M1 8h7M3 6h5M2 10h6" stroke="#1e7ad0" stroke-width="1.2"/></svg>
<div class="t" style="left:460px;top:748.5px;line-height:17px;font-size:12px;color:#222;">Easy access ▾</div>
<svg style="left:555px;top:726px;" width="30" height="32" viewBox="0 0 30 32"><path d="M3 1 H18 L23 6 V28 H3 Z" fill="#fff" stroke="#9a9a9a"/><path d="M12 22 L17 27 L27 14" stroke="#f0743a" stroke-width="3.2" fill="none"/></svg>
<div class="t" style="left:269px;width:600px;text-align:center;top:760.5px;line-height:17px;font-size:12px;color:#222;">Properties</div>
<div class="t" style="left:269px;width:600px;text-align:center;top:773.5px;line-height:17px;font-size:12px;color:#222;">▾</div>
<svg style="left:600px;top:726px;" width="17" height="16" viewBox="0 0 17 16"><path d="M1 2 H7 L8 4 H15 V14 H1 Z" fill="#f3d36b" stroke="#c9a03a" stroke-width="0.8"/><rect x="4" y="8" width="10" height="6" fill="#3a9ad9" stroke="#2a6aa8" stroke-width="0.6"/><rect x="6" y="10" width="6" height="3" fill="#fff"/></svg>
<div class="t" style="left:620px;top:726.5px;line-height:17px;font-size:12px;color:#222;">Open ▾</div>
<svg style="left:601px;top:748px;" width="16" height="16" viewBox="0 0 16 16"><path d="M2 1 H11 L15 5 V15 H2 Z" fill="#fff" stroke="#9ab0d0"/><path d="M5 13 L12 5" stroke="#6a8ac0" stroke-width="1.5"/></svg>
<div class="t" style="left:620px;top:748.5px;line-height:17px;font-size:12px;color:#8d8d8d;">Edit</div>
<svg style="left:600px;top:769px;" width="18" height="18" viewBox="0 0 18 18"><path d="M1 2 H8 V12 H1 Z" fill="#f0d060"/><circle cx="11" cy="11" r="6" fill="#fff" stroke="#888"/><path d="M11 7v4h3" stroke="#555" fill="none"/><path d="M2 10 L6 14 L9 8" stroke="#1aa02a" stroke-width="2" fill="none"/></svg>
<div class="t" style="left:620px;top:770.5px;line-height:17px;font-size:12px;color:#222;">History</div>
<svg style="left:677px;top:726px;" width="16" height="16" viewBox="0 0 16 16"><rect x="1" y="1" width="14" height="14" fill="#3a9ae8"/><rect x="3" y="3" width="4" height="4" fill="#fff"/><rect x="9" y="3" width="4" height="4" fill="#fff"/><rect x="3" y="9" width="4" height="4" fill="#fff"/><rect x="9" y="9" width="4" height="4" fill="#fff"/></svg>
<div class="t" style="left:696px;top:726.5px;line-height:17px;font-size:12px;color:#222;">Select all</div>
<svg style="left:677px;top:748px;" width="16" height="16" viewBox="0 0 16 16"><rect x="2" y="2" width="4" height="4" fill="none" stroke="#888"/><rect x="10" y="2" width="4" height="4" fill="none" stroke="#888"/><rect x="2" y="10" width="4" height="4" fill="none" stroke="#888"/><rect x="10" y="10" width="4" height="4" fill="none" stroke="#888"/></svg>
<div class="t" style="left:696px;top:748.5px;line-height:17px;font-size:12px;color:#222;">Select none</div>
<svg style="left:677px;top:770px;" width="16" height="16" viewBox="0 0 16 16"><rect x="2" y="2" width="4" height="4" fill="none" stroke="#888"/><rect x="8" y="1" width="7" height="7" fill="#3a9ae8"/><rect x="1" y="8" width="7" height="7" fill="#3a9ae8"/><rect x="10" y="10" width="4" height="4" fill="none" stroke="#888"/></svg>
<div class="t" style="left:696px;top:770.5px;line-height:17px;font-size:12px;color:#222;">Invert selection</div>
<div style="left:5px;top:811px;width:1169px;height:524px;background:#fff;"></div>
<svg style="left:14px;top:819px;" width="21" height="21" viewBox="0 0 21 21"><circle cx="10.5" cy="10.5" r="9.3" fill="none" stroke="#5d5d5d" stroke-width="1.2"/><path d="M15 10.5 H6.5 M10 7 L6.5 10.5 L10 14" stroke="#5d5d5d" stroke-width="1.8" fill="none"/></svg>
<svg style="left:43px;top:819px;" width="21" height="21" viewBox="0 0 21 21"><circle cx="10.5" cy="10.5" r="9.3" fill="none" stroke="#c8c8c8" stroke-width="1.2"/><path d="M6 10.5 H14.5 M11 7 L14.5 10.5 L11 14" stroke="#c0c0c0" stroke-width="1.8" fill="none"/></svg>
<svg style="left:73px;top:826px;" width="9" height="6" viewBox="0 0 9 6"><path d="M0.5 0.5 L8.5 0.5 L4.5 5 Z" fill="#666"/></svg>
<svg style="left:94px;top:822px;" width="12" height="14" viewBox="0 0 12 14"><path d="M6 13 V2 M1.5 6 L6 1.5 L10.5 6" stroke="#5d5d5d" stroke-width="1.6" fill="none"/></svg>
<div style="left:113px;top:818px;width:835px;height:22px;border:1px solid #d9d9d9;box-sizing:border-box;background:#fff;"></div>
<div style="left:922px;top:819px;width:1px;height:20px;background:#e5e5e5;"></div>
<svg style="left:116px;top:821px" width="16" height="16"><use href="#efold"/></svg>
<svg style="left:138px;top:825px;" width="6" height="9" viewBox="0 0 6 9"><path d="M1 0.5 L5 4.5 L1 8.5 Z" fill="#555"/></svg>
<div class="t" style="left:153.5px;top:821.5px;line-height:17px;font-size:12px;color:#111;">This PC</div>
<svg style="left:201.5px;top:825px;" width="6" height="9" viewBox="0 0 6 9"><path d="M1 0.5 L5 4.5 L1 8.5 Z" fill="#555"/></svg>
<div class="t" style="left:216px;top:821.5px;line-height:17px;font-size:12px;color:#111;">Downloads</div>
<svg style="left:283.5px;top:825px;" width="6" height="9" viewBox="0 0 6 9"><path d="M1 0.5 L5 4.5 L1 8.5 Z" fill="#555"/></svg>
<div class="t" style="left:298px;top:821.5px;line-height:17px;font-size:12px;color:#111;">testaquascript</div>
<svg style="left:908px;top:825px;" width="12" height="8" viewBox="0 0 12 8"><path d="M1 1 L6 6 L11 1" stroke="#555" stroke-width="1.4" fill="none"/></svg>
<svg style="left:929px;top:822px;" width="14" height="14" viewBox="0 0 14 14"><path d="M11.5 7 A4.5 4.5 0 1 1 9.5 3.2" stroke="#555" stroke-width="1.5" fill="none"/><path d="M8 1 L11 3.5 L8 5.5" stroke="#555" stroke-width="1.4" fill="none"/></svg>
<div style="left:961px;top:818px;width:201px;height:22px;border:1px solid #d9d9d9;box-sizing:border-box;"></div>
<div class="t" style="left:970px;top:821.5px;line-height:17px;font-size:12px;color:#6d6d6d;">Search testaquascript</div>
<svg style="left:1141px;top:822px;" width="14" height="14" viewBox="0 0 14 14"><circle cx="8.5" cy="5.5" r="4" fill="none" stroke="#555" stroke-width="1.4"/><path d="M5.5 8.5 L1.5 12.5" stroke="#555" stroke-width="1.8"/></svg>
<div style="left:5px;top:848px;width:250px;height:462px;overflow:hidden;">
<svg style="left:41px;top:2px" width="16" height="16"><use href="#efold"/></svg>
<div class="t" style="left:61px;top:2.5px;line-height:17px;font-size:12px;color:#000;">Translations Nhi</div>
<svg style="left:41px;top:23px" width="16" height="16"><use href="#efold"/></svg>
<div class="t" style="left:61px;top:23.5px;line-height:17px;font-size:12px;color:#000;">VA</div>
<svg style="left:41px;top:44px" width="16" height="16"><use href="#efold"/></svg>
<div class="t" style="left:61px;top:44.5px;line-height:17px;font-size:12px;color:#000;">Vertica</div>
<svg style="left:41px;top:65px" width="16" height="16"><use href="#fvid"/></svg>
<div class="t" style="left:61px;top:65.5px;line-height:17px;font-size:12px;color:#000;">Videos</div>
<svg style="left:41px;top:86px" width="16" height="16"><use href="#efold"/></svg>
<div class="t" style="left:61px;top:86.5px;line-height:17px;font-size:12px;color:#000;">VM</div>
<svg style="left:41px;top:107px" width="16" height="16"><use href="#efold"/></svg>
<div class="t" style="left:61px;top:107.5px;line-height:17px;font-size:12px;color:#000;">VNCExport</div>
<svg style="left:41px;top:128px" width="16" height="16"><use href="#ezip"/></svg>
<div class="t" style="left:61px;top:128.5px;line-height:17px;font-size:12px;color:#000;">AttachmentsRenamed.zip</div>
<svg style="left:41px;top:149px" width="16" height="16"><use href="#ezip"/></svg>
<div class="t" style="left:61px;top:149.5px;line-height:17px;font-size:12px;color:#000;">Commands.encrypted.zip</div>
<svg style="left:41px;top:170px" width="16" height="16"><use href="#ezip"/></svg>
<div class="t" style="left:61px;top:170.5px;line-height:17px;font-size:12px;color:#000;">connections.encrypted.zip</div>
<svg style="left:41px;top:191px" width="16" height="16"><use href="#ezip"/></svg>
<div class="t" style="left:61px;top:191.5px;line-height:17px;font-size:12px;color:#000;">VNCExport.zip</div>
<svg style="left:29px;top:212px" width="16" height="16"><use href="#epc"/></svg>
<div class="t" style="left:51px;top:212.5px;line-height:17px;font-size:12px;color:#000;">This PC</div>
<svg style="left:41px;top:233px" width="16" height="16"><use href="#fdesk"/></svg>
<div class="t" style="left:61px;top:233.5px;line-height:17px;font-size:12px;color:#000;">Desktop</div>
<svg style="left:41px;top:254px" width="16" height="16"><use href="#fdocs"/></svg>
<div class="t" style="left:61px;top:254.5px;line-height:17px;font-size:12px;color:#000;">Documents</div>
<div style="left:1px;top:273px;width:249px;height:22px;background:#f7f7f7;border:1px solid #dedede;box-sizing:border-box;"></div>
<svg style="left:41px;top:275px" width="16" height="16"><use href="#fdl"/></svg>
<div class="t" style="left:61px;top:275.5px;line-height:17px;font-size:12px;color:#000;">Downloads</div>
<svg style="left:41px;top:296px" width="16" height="16"><use href="#fmusic"/></svg>
<div class="t" style="left:61px;top:296.5px;line-height:17px;font-size:12px;color:#000;">Music</div>
<svg style="left:41px;top:317px" width="16" height="16"><use href="#fpics"/></svg>
<div class="t" style="left:61px;top:317.5px;line-height:17px;font-size:12px;color:#000;">Pictures</div>
<svg style="left:41px;top:338px" width="16" height="16"><use href="#fvid"/></svg>
<div class="t" style="left:61px;top:338.5px;line-height:17px;font-size:12px;color:#000;">Videos</div>
<svg style="left:41px;top:359px" width="16" height="16"><use href="#edrivec"/></svg>
<div class="t" style="left:61px;top:359.5px;line-height:17px;font-size:12px;color:#000;">BOOTCAMP (C:)</div>
<svg style="left:41px;top:380px" width="16" height="16"><use href="#edrive"/></svg>
<div class="t" style="left:61px;top:380.5px;line-height:17px;font-size:12px;color:#000;">Macintosh HD (D:)</div>
<svg style="left:41px;top:401px" width="16" height="16"><use href="#edrive"/></svg>
<div class="t" style="left:61px;top:401.5px;line-height:17px;font-size:12px;color:#000;">Elements (F:)</div>
<svg style="left:29px;top:422px" width="16" height="16"><use href="#elib"/></svg>
<div class="t" style="left:51px;top:422.5px;line-height:17px;font-size:12px;color:#000;">Libraries</div>
<svg style="left:41px;top:443px" width="16" height="16"><use href="#ldoc"/></svg>
<div class="t" style="left:61px;top:443.5px;line-height:17px;font-size:12px;color:#000;">Documents</div>
</div>
<div style="left:255px;top:848px;width:16px;height:462px;background:#f0f0f0;"></div>
<svg style="left:258px;top:852px;" width="10" height="7" viewBox="0 0 10 7"><path d="M1 6 L5 2 L9 6" stroke="#606060" stroke-width="1.8" fill="none"/></svg>
<svg style="left:258px;top:1298px;" width="10" height="7" viewBox="0 0 10 7"><path d="M1 1 L5 5 L9 1" stroke="#606060" stroke-width="1.8" fill="none"/></svg>
<div style="left:256px;top:1182px;width:14px;height:68px;background:#cdcdcd;"></div>
<div class="t" style="left:291px;top:852.5px;line-height:17px;font-size:12px;color:#4c607a;">Name</div>
<div class="t" style="left:552px;top:852.5px;line-height:17px;font-size:12px;color:#4c607a;">Date modified</div>
<div class="t" style="left:672px;top:852.5px;line-height:17px;font-size:12px;color:#4c607a;">Type</div>
<div class="t" style="left:792px;top:852.5px;line-height:17px;font-size:12px;color:#4c607a;">Size</div>
<div style="left:544px;top:850px;width:1px;height:22px;background:#e3e8f0;"></div>
<div style="left:664px;top:850px;width:1px;height:22px;background:#e3e8f0;"></div>
<div style="left:784px;top:850px;width:1px;height:22px;background:#e3e8f0;"></div>
<div style="left:864px;top:850px;width:1px;height:22px;background:#e3e8f0;"></div>
<svg style="left:410px;top:851px;" width="9" height="5" viewBox="0 0 9 5"><path d="M0.5 4.5 L8.5 4.5 L4.5 0.5 Z" fill="#9ab8d8"/></svg>
<div style="left:272px;top:873px;width:887px;height:437px;overflow:hidden;">
<svg style="left:22px;top:8px" width="16" height="16"><use href="#efold"/></svg>
<div class="t" style="left:40px;top:8.5px;line-height:17px;font-size:12px;color:#000;">AquaScripts</div>
<div class="t" style="left:280px;top:8.5px;line-height:17px;font-size:12px;color:#6d6d6d;">12/17/2021 1:38 PM</div>
<div class="t" style="left:400px;top:8.5px;line-height:17px;font-size:12px;color:#6d6d6d;">File folder</div>
<div style="left:16px;top:27px;width:573px;height:22px;background:#f7f7f7;border:1px solid #dedede;box-sizing:border-box;"></div>
<svg style="left:22px;top:29px" width="16" height="16"><use href="#efold"/></svg>
<div class="t" style="left:40px;top:29.5px;line-height:17px;font-size:12px;color:#000;">Servers</div>
<div class="t" style="left:280px;top:29.5px;line-height:17px;font-size:12px;color:#6d6d6d;">12/17/2021 1:39 PM</div>
<div class="t" style="left:400px;top:29.5px;line-height:17px;font-size:12px;color:#6d6d6d;">File folder</div>
<svg style="left:22px;top:50px" width="16" height="16"><use href="#efold"/></svg>
<div class="t" style="left:40px;top:50.5px;line-height:17px;font-size:12px;color:#000;">User Files</div>
<div class="t" style="left:280px;top:50.5px;line-height:17px;font-size:12px;color:#6d6d6d;">12/17/2021 1:37 PM</div>
<div class="t" style="left:400px;top:50.5px;line-height:17px;font-size:12px;color:#6d6d6d;">File folder</div>
</div>
<div class="t" style="left:19px;top:1314.5px;line-height:17px;font-size:12px;color:#1e3a5a;">3 items</div>
<div style="left:67px;top:1314px;width:1px;height:16px;background:#e8e8e8;"></div>
<div class="t" style="left:78px;top:1314.5px;line-height:17px;font-size:12px;color:#1e3a5a;">1 item selected</div>
<div style="left:167px;top:1314px;width:1px;height:16px;background:#e8e8e8;"></div>
<svg style="left:1127px;top:1311px;" width="21" height="19" viewBox="0 0 21 19"><rect x="0.5" y="0.5" width="20" height="19" fill="#cce8f7" stroke="#2a9ae0"/><circle cx="5" cy="5" r="1.3" fill="#3a3"/><circle cx="5" cy="9.5" r="1.3" fill="#e33"/><circle cx="5" cy="14" r="1.3" fill="#33e"/><path d="M8 5h3M12 5h4M8 9.5h3M12 9.5h4M8 14h3M12 14h4" stroke="#555" stroke-width="1.2"/></svg>
<svg style="left:1152px;top:1316px;" width="15" height="13" viewBox="0 0 15 13"><rect x="0.5" y="0.5" width="14" height="12" rx="1" fill="#fff" stroke="#8a9ab0"/><rect x="2" y="2" width="11" height="9" fill="#3a8ae8"/><path d="M2 8 Q7 4 13 8 V11 H2 Z" fill="#2a6a2a"/></svg>
<div style="left:1183px;top:237px;width:1332px;height:1036px;background:#fff;"></div>
<div style="left:1183px;top:237px;width:1px;height:1036px;background:#b8b8b8;"></div>
<svg style="left:1192px;top:243px;" width="18" height="18" viewBox="0 0 18 18"><ellipse cx="7" cy="4" rx="6" ry="2.5" fill="#cfe6f7" stroke="#7ab"/><path d="M1 4 V12 A6 2.5 0 0 0 13 12 V4" fill="#3a9ae0"/><rect x="7" y="9" width="10" height="8" fill="#9cd0f0" stroke="#5a9ac8" stroke-width="0.6"/><circle cx="14" cy="4" r="2.5" fill="#3a8ae0"/></svg>
<div class="t" style="left:1764px;top:241.5px;line-height:21px;font-size:15px;color:#333;">Aqua Data Studio [testaquascript.xjs]</div>
<div style="left:2496px;top:250px;width:10px;height:2px;background:#111;"></div>
<div style="left:1189px;top:267px;width:1326px;height:25px;background:#f3f4f6;border-top:1px solid #d6d6d6;box-sizing:border-box;"></div>
<div class="t" style="left:1199px;top:273.0px;line-height:17px;font-size:11.8px;color:#000;">File</div>
<div class="t" style="left:1232px;top:273.0px;line-height:17px;font-size:11.8px;color:#000;">Edit</div>
<div class="t" style="left:1267px;top:273.0px;line-height:17px;font-size:11.8px;color:#000;">Server</div>
<div class="t" style="left:1314px;top:273.0px;line-height:17px;font-size:11.8px;color:#000;">Query</div>
<div class="t" style="left:1361px;top:273.0px;line-height:17px;font-size:11.8px;color:#000;">Automate</div>
<div class="t" style="left:1428px;top:273.0px;line-height:17px;font-size:11.8px;color:#000;">Query Builder</div>
<div class="t" style="left:1515px;top:273.0px;line-height:17px;font-size:11.8px;color:#000;">Visual Analytics</div>
<div class="t" style="left:1612px;top:273.0px;line-height:17px;font-size:11.8px;color:#000;">ER Modeler</div>
<div class="t" style="left:1687px;top:273.0px;line-height:17px;font-size:11.8px;color:#000;">Tools</div>
<div class="t" style="left:1730px;top:273.0px;line-height:17px;font-size:11.8px;color:#000;">DBA Tools</div>
<div class="t" style="left:1799px;top:273.0px;line-height:17px;font-size:11.8px;color:#000;">Window</div>
<div class="t" style="left:1858px;top:273.0px;line-height:17px;font-size:11.8px;color:#000;">Help</div>
<div style="left:1189px;top:292px;width:1326px;height:26px;background:#f0f0f0;border-top:1px solid #e4e4e4;box-sizing:border-box;"></div>
<svg style="left:1193px;top:297px;" width="16" height="16" viewBox="0 0 16 16"><rect x="2" y="3" width="8" height="12" fill="#8a8a8a"/><path d="M3 5h6M3 7h6" stroke="#ddd"/><path d="M11 1v8M7 5h8" stroke="#f0b020" stroke-width="2.2"/></svg>
<svg style="left:1215px;top:297px;" width="16" height="16" viewBox="0 0 16 16"><rect x="2" y="3" width="8" height="12" fill="#8a8a8a"/><path d="M3 5h6M3 7h6" stroke="#ddd"/><circle cx="11" cy="5" r="3.5" fill="#e85050"/><path d="M9 5h4" stroke="#fff"/></svg>
<svg style="left:1238px;top:297px;" width="16" height="16" viewBox="0 0 16 16"><rect x="5" y="2" width="10" height="9" fill="#fff" stroke="#b88a4a"/><path d="M5 5h10M5 8h10M8 2v9M11.5 2v9" stroke="#b88a4a"/><circle cx="5" cy="11" r="3.5" fill="#5ab85a"/></svg>
<div style="left:1259px;top:296px;width:1px;height:20px;background:#a0a0a0;"></div>
<svg style="left:1264px;top:297px;" width="16" height="16" viewBox="0 0 16 16"><rect x="2" y="3" width="7" height="12" fill="#8a8a8a"/><path d="M4 13 L13 4" stroke="#f0a040" stroke-width="4"/><path d="M1 15 L5 11" stroke="#555"/></svg>
<svg style="left:1286px;top:297px;" width="16" height="16" viewBox="0 0 16 16"><rect x="2" y="3" width="7" height="12" fill="#8a8a8a"/><path d="M5 12 L13 4" stroke="#f0a040" stroke-width="4"/><circle cx="5" cy="10" r="3.5" fill="#e85050"/></svg>
<div style="left:1308px;top:296px;width:1px;height:20px;background:#a0a0a0;"></div>
<svg style="left:1313px;top:297px;" width="16" height="16" viewBox="0 0 16 16"><rect x="1" y="2" width="13" height="11" fill="#fff" stroke="#999"/><rect x="1" y="2" width="13" height="3" fill="#4aa0e0"/><circle cx="10" cy="10" r="3" fill="#cde" stroke="#888"/><path d="M12 12 L15 15" stroke="#777" stroke-width="1.5"/></svg>
<svg style="left:1336px;top:297px;" width="16" height="16" viewBox="0 0 16 16"><rect x="1" y="2" width="13" height="11" fill="#fff" stroke="#999"/><rect x="1" y="2" width="13" height="3" fill="#4aa0e0"/><circle cx="10" cy="10" r="3" fill="#cde" stroke="#888"/><path d="M12 12 L15 15" stroke="#777" stroke-width="1.5"/></svg>
<svg style="left:1357px;top:297px;" width="16" height="16" viewBox="0 0 16 16"><rect x="1" y="2" width="13" height="11" fill="#fff" stroke="#999"/><rect x="1" y="2" width="13" height="3" fill="#4aa0e0"/><circle cx="10" cy="10" r="3" fill="#cde" stroke="#888"/><path d="M12 12 L15 15" stroke="#777" stroke-width="1.5"/></svg>
<svg style="left:1379px;top:297px;" width="16" height="16" viewBox="0 0 16 16"><rect x="1" y="2" width="13" height="11" fill="#fff" stroke="#999"/><rect x="1" y="2" width="13" height="3" fill="#4aa0e0"/><rect x="6" y="8" width="9" height="7" fill="#fff" stroke="#888"/></svg>
<svg style="left:1402px;top:297px;" width="16" height="16" viewBox="0 0 16 16"><rect x="1" y="2" width="12" height="10" fill="#2a3a5a" stroke="#4a70b0"/><path d="M3 6h3M3 8h3" stroke="#4c4"/><rect x="7" y="7" width="8" height="8" fill="#5a6a8a" stroke="#333"/></svg>
<div style="left:1423px;top:296px;width:1px;height:20px;background:#a0a0a0;"></div>
<svg style="left:1428px;top:297px;" width="16" height="16" viewBox="0 0 16 16"><path d="M2.5 1.5 H9 L12.5 5 V15.5 H2.5 Z" fill="#fff" stroke="#888"/><rect x="5" y="5" width="4" height="8" fill="#e8b060"/><path d="M5 7h4M5 9h4M5 11h4" stroke="#3a70c0"/></svg>
<svg style="left:1453px;top:303px;" width="8" height="5" viewBox="0 0 8 5"><path d="M0 0 L8 0 L4 4 Z" fill="#000"/></svg>
<div style="left:1467px;top:296px;width:1px;height:20px;background:#a0a0a0;"></div>
<svg style="left:1472px;top:297px;" width="16" height="16" viewBox="0 0 16 16"><rect x="5" y="1" width="10" height="13" fill="#fff" stroke="#c0a060"/><path d="M1 3 H11 V15 H1 Z" fill="#fff" stroke="#888"/><path d="M3 6h6M3 8h6M3 10h6M3 12h6" stroke="#5a8ad0"/></svg>
<div style="left:1494px;top:296px;width:1px;height:20px;background:#a0a0a0;"></div>
<svg style="left:1498px;top:297px;" width="16" height="16" viewBox="0 0 16 16"><rect x="0.5" y="1.5" width="15" height="13" fill="#fff" stroke="#888"/><rect x="0.5" y="1.5" width="15" height="2" fill="#4a7ac0"/><path d="M3 6h2M6 6h2M9 6h2M12 6h2M3 9h2M6 9h2M9 9h2M12 9h2M3 12h2M6 12h2M9 12h2M12 12h2" stroke="#666"/></svg>
<svg style="left:1521px;top:297px;" width="16" height="16" viewBox="0 0 16 16"><rect x="0.5" y="1.5" width="15" height="13" fill="#fff" stroke="#888"/><rect x="0.5" y="1.5" width="15" height="2" fill="#4a7ac0"/><rect x="3" y="5" width="8" height="10" fill="#e8e0d0" stroke="#c09a60"/><rect x="11" y="6" width="4" height="8" fill="#e8e0d0" stroke="#c09a60"/></svg>
<svg style="left:1542px;top:297px;" width="16" height="16" viewBox="0 0 16 16"><rect x="0.5" y="1.5" width="15" height="13" fill="#fff" stroke="#888"/><rect x="0.5" y="1.5" width="15" height="2" fill="#4a7ac0"/><rect x="5" y="6" width="7" height="9" rx="1.5" fill="#fde070" stroke="#d8b030"/></svg>
<svg style="left:1564px;top:297px;" width="16" height="16" viewBox="0 0 16 16"><rect x="0.5" y="1.5" width="15" height="13" fill="#fff" stroke="#888"/><rect x="0.5" y="1.5" width="15" height="2" fill="#4a7ac0"/><path d="M1 8h14M1 11.5h14M5.5 4v11M10.5 4v11" stroke="#777"/></svg>
<svg style="left:1586px;top:297px;" width="16" height="16" viewBox="0 0 16 16"><rect x="0.5" y="1.5" width="15" height="13" fill="#fff" stroke="#888"/><rect x="0.5" y="1.5" width="15" height="2" fill="#4a7ac0"/><rect x="3" y="6" width="3" height="3" fill="none" stroke="#777"/><rect x="8" y="6" width="5" height="2" fill="none" stroke="#777"/><rect x="3" y="10" width="2" height="4" fill="none" stroke="#777"/><path d="M8 13 L12 10" stroke="#555"/></svg>
<svg style="left:1608px;top:297px;" width="16" height="16" viewBox="0 0 16 16"><rect x="0.5" y="1.5" width="15" height="13" fill="#fff" stroke="#888"/><rect x="0.5" y="1.5" width="15" height="2" fill="#4a7ac0"/><path d="M3 6h2M7 6h7M3 9h2M7 9h7M3 12h2M7 12h7" stroke="#777"/></svg>
<svg style="left:1630px;top:297px;" width="16" height="16" viewBox="0 0 16 16"><rect x="0.5" y="1.5" width="15" height="13" fill="#fff" stroke="#888"/><rect x="0.5" y="1.5" width="15" height="2" fill="#4a7ac0"/><rect x="3" y="8" width="3" height="3" fill="#f0c070" stroke="#a07030"/><rect x="10" y="5" width="3" height="2.5" fill="#f0c070" stroke="#a07030"/><rect x="10" y="11" width="3" height="2.5" fill="#f0c070" stroke="#a07030"/><path d="M6 9.5 H8 V6 H10 M8 9.5 V12 H10" stroke="#777" fill="none"/></svg>
<svg style="left:1652px;top:297px;" width="16" height="16" viewBox="0 0 16 16"><rect x="0.5" y="1.5" width="15" height="13" fill="#fff" stroke="#888"/><rect x="0.5" y="1.5" width="15" height="2" fill="#4a7ac0"/><rect x="3" y="6" width="2" height="8" fill="#e0a020"/><rect x="7" y="8" width="2" height="6" fill="#e04040"/><rect x="11" y="10" width="2" height="4" fill="#3a70c0"/></svg>
<div style="left:1675px;top:296px;width:1px;height:20px;background:#a0a0a0;"></div>
<svg style="left:1680px;top:297px;" width="17" height="16" viewBox="0 0 17 16"><rect x="0" y="1" width="5" height="14" fill="#8a8a8a"/><rect x="3" y="3" width="13" height="11" fill="#4a80c8" stroke="#2a5a98"/><rect x="5" y="5" width="9" height="5" fill="#2a3a4a"/><path d="M12 9 Q12 12 8 12 M9 10 L7 12 L9 14" stroke="#fff" stroke-width="1.3" fill="none"/></svg>
<div class="t" style="left:1699px;top:297.5px;line-height:15px;font-size:11px;color:#000;">BuildBox</div>
<div style="left:1189px;top:318px;width:21px;height:905px;background:#f0f0f0;border-right:1px solid #a8a8a8;box-sizing:border-box;"></div>
<div style="left:1190px;top:318px;width:20px;height:94px;background:#bdbdbd;"></div>
<div style="left:1190px;top:1126px;width:20px;height:97px;background:#bdbdbd;"></div>
<div class="t" style="left:1160px;top:354.4px;width:80px;height:14px;line-height:14px;font-size:11.5px;text-align:center;transform:rotate(-90deg) scaleX(0.76);color:#000;">F1: Servers</div>
<div style="left:1196px;top:394px;width:10px;height:7px;background:#8a8a8a;"></div>
<div class="t" style="left:1160px;top:439px;width:80px;height:14px;line-height:14px;font-size:11.5px;text-align:center;transform:rotate(-90deg) scaleX(0.76);color:#000;">F2: Files</div>
<svg style="left:1193px;top:466px;" width="14" height="13" viewBox="0 0 14 13"><path d="M2 1 H9 L12 4 V12 H2 Z" fill="#fff" stroke="#666"/><path d="M4 6h6M4 8h6M4 10h6" stroke="#3a7ad0"/></svg>
<div class="t" style="left:1160px;top:1166.7px;width:80px;height:14px;line-height:14px;font-size:11.5px;text-align:center;transform:rotate(-90deg) scaleX(0.76);color:#000;">F3: Projects</div>
<svg style="left:1192px;top:1199px" width="16" height="16"><use href="#pfold"/></svg>
<div style="left:1210px;top:318px;width:359px;height:21px;background:linear-gradient(#d6e0ee,#c8d4e6);border-bottom:1px solid #9aa6b8;border-top:1px solid #9aa6b8;box-sizing:border-box;"></div>
<div class="t" style="left:1215px;top:321.0px;line-height:16px;font-size:11.5px;color:#000;">Servers</div>
<svg style="left:1520px;top:321px;" width="22" height="16" viewBox="0 0 22 16"><circle cx="8" cy="8" r="4.5" fill="none" stroke="#666" stroke-width="3" stroke-dasharray="2 1.5"/><circle cx="8" cy="8" r="2" fill="#666"/><path d="M15 7 L20 7 L17.5 10 Z" fill="#666"/></svg>
<svg style="left:1548px;top:322px;" width="16" height="14" viewBox="0 0 16 14"><path d="M2 1v12" stroke="#666" stroke-width="2"/><path d="M14 7 H6 M9 4 L6 7 L9 10" stroke="#666" stroke-width="1.2" fill="none"/></svg>
<div style="left:1210px;top:339px;width:342px;height:411px;background:#fff;"></div>
<div style="left:1568px;top:318px;width:1px;height:905px;background:#a8a8a8;"></div>
<div style="left:1238px;top:355px;width:0;height:395px;border-left:1px dotted #9a9a9a;"></div>
<div style="left:1257px;top:420px;width:0;height:330px;border-left:1px dotted #9a9a9a;"></div>
<div style="left:1276px;top:500px;width:0;height:250px;border-left:1px dotted #9a9a9a;"></div>
<div style="left:1295px;top:515px;width:0;height:235px;border-left:1px dotted #9a9a9a;"></div>
<div style="left:1211px;top:339px;width:341px;height:411px;overflow:hidden;">
<svg style="left:4px;top:3.5px;" width="9" height="9" viewBox="0 0 9 9"><use href="#xminus"/></svg>
<div style="left:13px;top:8px;width:8px;height:0;border-top:1px dotted #9a9a9a;"></div>
<div class="t" style="left:39px;top:0.5px;line-height:15px;font-size:10.7px;color:#000;">Local Database Servers</div>
<svg style="left:22px;top:0px;" width="16" height="16" viewBox="0 0 16 16"><use href="#globe"/></svg>
<svg style="left:23px;top:19.5px;" width="9" height="9" viewBox="0 0 9 9"><use href="#xplus"/></svg>
<div style="left:32px;top:24px;width:7px;height:0;border-top:1px dotted #9a9a9a;"></div>
<div class="t" style="left:58px;top:16.5px;line-height:15px;font-size:10.7px;color:#000;">Aquafold</div>
<svg style="left:40px;top:16px;" width="16" height="16" viewBox="0 0 16 16"><use href="#afold"/></svg>
<svg style="left:23px;top:35.5px;" width="9" height="9" viewBox="0 0 9 9"><use href="#xplus"/></svg>
<div style="left:32px;top:40px;width:7px;height:0;border-top:1px dotted #9a9a9a;"></div>
<div class="t" style="left:58px;top:32.5px;line-height:15px;font-size:10.7px;color:#000;">Excel</div>
<svg style="left:40px;top:32px;" width="16" height="16" viewBox="0 0 16 16"><use href="#afold"/></svg>
<svg style="left:23px;top:51.5px;" width="9" height="9" viewBox="0 0 9 9"><use href="#xminus"/></svg>
<div style="left:32px;top:56px;width:7px;height:0;border-top:1px dotted #9a9a9a;"></div>
<div class="t" style="left:58px;top:48.5px;line-height:15px;font-size:10.7px;color:#000;">IAWS</div>
<svg style="left:40px;top:48px;" width="16" height="16" viewBox="0 0 16 16"><use href="#afold"/></svg>
<svg style="left:42px;top:67.5px;" width="9" height="9" viewBox="0 0 9 9"><use href="#xplus"/></svg>
<div style="left:51px;top:72px;width:7px;height:0;border-top:1px dotted #9a9a9a;"></div>
<div class="t" style="left:77px;top:64.5px;line-height:15px;font-size:10.7px;color:#000;">Cassandra  172.24.1.122 2.2</div>
<svg style="left:59px;top:64px;" width="16" height="16" viewBox="0 0 16 16"><use href="#srv"/></svg>
<svg style="left:42px;top:83.5px;" width="9" height="9" viewBox="0 0 9 9"><use href="#xplus"/></svg>
<div style="left:51px;top:88px;width:7px;height:0;border-top:1px dotted #9a9a9a;"></div>
<div class="t" style="left:77px;top:80.5px;line-height:15px;font-size:10.7px;color:#000;">Cassandra  172.24.1.123 2.7</div>
<svg style="left:59px;top:80px;" width="16" height="16" viewBox="0 0 16 16"><use href="#srv"/></svg>
<svg style="left:42px;top:99.5px;" width="9" height="9" viewBox="0 0 9 9"><use href="#xplus"/></svg>
<div style="left:51px;top:104px;width:7px;height:0;border-top:1px dotted #9a9a9a;"></div>
<div class="t" style="left:77px;top:96.5px;line-height:15px;font-size:10.7px;color:#000;">DB2 LUW  172.24.1.140 v10.1</div>
<svg style="left:59px;top:96px;" width="16" height="16" viewBox="0 0 16 16"><use href="#srv"/></svg>
<svg style="left:42px;top:115.5px;" width="9" height="9" viewBox="0 0 9 9"><use href="#xplus"/></svg>
<div style="left:51px;top:120px;width:7px;height:0;border-top:1px dotted #9a9a9a;"></div>
<div class="t" style="left:77px;top:112.5px;line-height:15px;font-size:10.7px;color:#000;">DB2 LUW  172.24.1.145 v10.5</div>
<svg style="left:59px;top:112px;" width="16" height="16" viewBox="0 0 16 16"><use href="#srvg"/></svg>
<svg style="left:42px;top:131.5px;" width="9" height="9" viewBox="0 0 9 9"><use href="#xminus"/></svg>
<div style="left:51px;top:136px;width:7px;height:0;border-top:1px dotted #9a9a9a;"></div>
<div style="left:75px;top:128px;width:150px;height:16px;background:#3399ff;outline:1px dotted #000;outline-offset:-1px;"></div>
<div class="t" style="left:77px;top:128.5px;line-height:15px;font-size:10.7px;color:#fff;">DB2 LUW  172.24.1.199 v11.5</div>
<svg style="left:59px;top:128px;" width="16" height="16" viewBox="0 0 16 16"><use href="#srvg"/></svg>
<svg style="left:61px;top:147.5px;" width="9" height="9" viewBox="0 0 9 9"><use href="#xplus"/></svg>
<div style="left:70px;top:152px;width:7px;height:0;border-top:1px dotted #9a9a9a;"></div>
<div class="t" style="left:96px;top:144.5px;line-height:15px;font-size:10.7px;color:#000;">My Schema</div>
<svg style="left:78px;top:144px;" width="16" height="16" viewBox="0 0 16 16"><use href="#schmb"/></svg>
<svg style="left:61px;top:163.5px;" width="9" height="9" viewBox="0 0 9 9"><use href="#xminus"/></svg>
<div style="left:70px;top:168px;width:7px;height:0;border-top:1px dotted #9a9a9a;"></div>
<div class="t" style="left:96px;top:160.5px;line-height:15px;font-size:10.7px;color:#000;">Schema</div>
<svg style="left:78px;top:160px;" width="16" height="16" viewBox="0 0 16 16"><use href="#afoldb"/></svg>
<svg style="left:80px;top:179.5px;" width="9" height="9" viewBox="0 0 9 9"><use href="#xplus"/></svg>
<div style="left:89px;top:184px;width:7px;height:0;border-top:1px dotted #9a9a9a;"></div>
<div class="t" style="left:115px;top:176.5px;line-height:15px;font-size:10.7px;color:#000;">ADMINISTRATOR</div>
<svg style="left:97px;top:176px;" width="16" height="16" viewBox="0 0 16 16"><use href="#schm"/></svg>
<svg style="left:80px;top:195.5px;" width="9" height="9" viewBox="0 0 9 9"><use href="#xplus"/></svg>
<div style="left:89px;top:200px;width:7px;height:0;border-top:1px dotted #9a9a9a;"></div>
<div class="t" style="left:115px;top:192.5px;line-height:15px;font-size:10.7px;color:#000;">ADS_DB</div>
<svg style="left:97px;top:192px;" width="16" height="16" viewBox="0 0 16 16"><use href="#schm"/></svg>
<svg style="left:80px;top:211.5px;" width="9" height="9" viewBox="0 0 9 9"><use href="#xplus"/></svg>
<div style="left:89px;top:216px;width:7px;height:0;border-top:1px dotted #9a9a9a;"></div>
<div class="t" style="left:115px;top:208.5px;line-height:15px;font-size:10.7px;color:#000;">ADS_DB1</div>
<svg style="left:97px;top:208px;" width="16" height="16" viewBox="0 0 16 16"><use href="#schm"/></svg>
<svg style="left:80px;top:227.5px;" width="9" height="9" viewBox="0 0 9 9"><use href="#xplus"/></svg>
<div style="left:89px;top:232px;width:7px;height:0;border-top:1px dotted #9a9a9a;"></div>
<div class="t" style="left:115px;top:224.5px;line-height:15px;font-size:10.7px;color:#000;">DB2ADMIN</div>
<svg style="left:97px;top:224px;" width="16" height="16" viewBox="0 0 16 16"><use href="#schm"/></svg>
<svg style="left:80px;top:243.5px;" width="9" height="9" viewBox="0 0 9 9"><use href="#xplus"/></svg>
<div style="left:89px;top:248px;width:7px;height:0;border-top:1px dotted #9a9a9a;"></div>
<div class="t" style="left:115px;top:240.5px;line-height:15px;font-size:10.7px;color:#000;">DC1</div>
<svg style="left:97px;top:240px;" width="16" height="16" viewBox="0 0 16 16"><use href="#schm"/></svg>
<svg style="left:80px;top:259.5px;" width="9" height="9" viewBox="0 0 9 9"><use href="#xplus"/></svg>
<div style="left:89px;top:264px;width:7px;height:0;border-top:1px dotted #9a9a9a;"></div>
<div class="t" style="left:115px;top:256.5px;line-height:15px;font-size:10.7px;color:#000;">dc2</div>
<svg style="left:97px;top:256px;" width="16" height="16" viewBox="0 0 16 16"><use href="#schm"/></svg>
<svg style="left:80px;top:275.5px;" width="9" height="9" viewBox="0 0 9 9"><use href="#xplus"/></svg>
<div style="left:89px;top:280px;width:7px;height:0;border-top:1px dotted #9a9a9a;"></div>
<div class="t" style="left:115px;top:272.5px;line-height:15px;font-size:10.7px;color:#000;">DC2</div>
<svg style="left:97px;top:272px;" width="16" height="16" viewBox="0 0 16 16"><use href="#schm"/></svg>
<svg style="left:80px;top:291.5px;" width="9" height="9" viewBox="0 0 9 9"><use href="#xplus"/></svg>
<div style="left:89px;top:296px;width:7px;height:0;border-top:1px dotted #9a9a9a;"></div>
<div class="t" style="left:115px;top:288.5px;line-height:15px;font-size:10.7px;color:#000;">NULLID</div>
<svg style="left:97px;top:288px;" width="16" height="16" viewBox="0 0 16 16"><use href="#schm"/></svg>
<svg style="left:80px;top:307.5px;" width="9" height="9" viewBox="0 0 9 9"><use href="#xplus"/></svg>
<div style="left:89px;top:312px;width:7px;height:0;border-top:1px dotted #9a9a9a;"></div>
<div class="t" style="left:115px;top:304.5px;line-height:15px;font-size:10.7px;color:#000;">SQLJ</div>
<svg style="left:97px;top:304px;" width="16" height="16" viewBox="0 0 16 16"><use href="#schm"/></svg>
<svg style="left:80px;top:323.5px;" width="9" height="9" viewBox="0 0 9 9"><use href="#xplus"/></svg>
<div style="left:89px;top:328px;width:7px;height:0;border-top:1px dotted #9a9a9a;"></div>
<div class="t" style="left:115px;top:320.5px;line-height:15px;font-size:10.7px;color:#000;">SYSCAT</div>
<svg style="left:97px;top:320px;" width="16" height="16" viewBox="0 0 16 16"><use href="#schm"/></svg>
<svg style="left:80px;top:339.5px;" width="9" height="9" viewBox="0 0 9 9"><use href="#xplus"/></svg>
<div style="left:89px;top:344px;width:7px;height:0;border-top:1px dotted #9a9a9a;"></div>
<div class="t" style="left:115px;top:336.5px;line-height:15px;font-size:10.7px;color:#000;">SYSFUN</div>
<svg style="left:97px;top:336px;" width="16" height="16" viewBox="0 0 16 16"><use href="#schm"/></svg>
<svg style="left:80px;top:355.5px;" width="9" height="9" viewBox="0 0 9 9"><use href="#xplus"/></svg>
<div style="left:89px;top:360px;width:7px;height:0;border-top:1px dotted #9a9a9a;"></div>
<div class="t" style="left:115px;top:352.5px;line-height:15px;font-size:10.7px;color:#000;">SYSIBM</div>
<svg style="left:97px;top:352px;" width="16" height="16" viewBox="0 0 16 16"><use href="#schm"/></svg>
<svg style="left:80px;top:371.5px;" width="9" height="9" viewBox="0 0 9 9"><use href="#xplus"/></svg>
<div style="left:89px;top:376px;width:7px;height:0;border-top:1px dotted #9a9a9a;"></div>
<div class="t" style="left:115px;top:368.5px;line-height:15px;font-size:10.7px;color:#000;">SYSIBMADM</div>
<svg style="left:97px;top:368px;" width="16" height="16" viewBox="0 0 16 16"><use href="#schm"/></svg>
<svg style="left:80px;top:387.5px;" width="9" height="9" viewBox="0 0 9 9"><use href="#xplus"/></svg>
<div style="left:89px;top:392px;width:7px;height:0;border-top:1px dotted #9a9a9a;"></div>
<div class="t" style="left:115px;top:384.5px;line-height:15px;font-size:10.7px;color:#000;">SYSIBMINTERNAL</div>
<svg style="left:97px;top:384px;" width="16" height="16" viewBox="0 0 16 16"><use href="#schm"/></svg>
<svg style="left:80px;top:403.5px;" width="9" height="9" viewBox="0 0 9 9"><use href="#xplus"/></svg>
<div style="left:89px;top:408px;width:7px;height:0;border-top:1px dotted #9a9a9a;"></div>
<div class="t" style="left:115px;top:400.5px;line-height:15px;font-size:10.7px;color:#000;">SYSIBMTS</div>
<svg style="left:97px;top:400px;" width="16" height="16" viewBox="0 0 16 16"><use href="#schm"/></svg>
</div>
<div style="left:1552px;top:339px;width:16px;height:411px;background:#f0f0f0;"></div>
<div style="left:1553px;top:357px;width:14px;height:36px;background:#cdcdcd;"></div>
<svg style="left:1555px;top:344px;" width="10" height="7" viewBox="0 0 10 7"><path d="M1 6 L5 2 L9 6" stroke="#555" stroke-width="1.6" fill="none"/></svg>
<svg style="left:1555px;top:737px;" width="10" height="7" viewBox="0 0 10 7"><path d="M1 1 L5 5 L9 1" stroke="#555" stroke-width="1.6" fill="none"/></svg>
<div style="left:1210px;top:750px;width:358px;height:15px;background:#f0f0f0;"></div>
<div style="left:1228px;top:751px;width:285px;height:14px;background:#cdcdcd;"></div>
<svg style="left:1215px;top:753px;" width="7" height="10" viewBox="0 0 7 10"><path d="M6 1 L2 5 L6 9" stroke="#555" stroke-width="1.6" fill="none"/></svg>
<svg style="left:1540px;top:753px;" width="7" height="10" viewBox="0 0 7 10"><path d="M1 1 L5 5 L1 9" stroke="#555" stroke-width="1.6" fill="none"/></svg>
<div style="left:1210px;top:765px;width:358px;height:10px;background:#f0f0f0;border-top:1px solid #a8a8a8;border-bottom:1px solid #a8a8a8;box-sizing:border-box;"></div>
<div class="t" style="left:1090px;width:600px;text-align:center;top:767.0px;line-height:6px;font-size:6px;color:#999;">∙∙∙∙∙</div>
<div style="left:1210px;top:775px;width:358px;height:20px;background:linear-gradient(#f2f2f2,#dedede);border-bottom:1px solid #9a9a9a;box-sizing:border-box;"></div>
<div class="t" style="left:1215px;top:777.0px;line-height:16px;font-size:11.5px;color:#6d6d6d;">Projects</div>
<svg style="left:1520px;top:777px;" width="22" height="16" viewBox="0 0 22 16"><circle cx="8" cy="8" r="4.5" fill="none" stroke="#777" stroke-width="3" stroke-dasharray="2 1.5"/><circle cx="8" cy="8" r="2" fill="#777"/><path d="M15 7 L20 7 L17.5 10 Z" fill="#777"/></svg>
<svg style="left:1548px;top:778px;" width="16" height="14" viewBox="0 0 16 14"><path d="M2 1v12" stroke="#777" stroke-width="2"/><path d="M14 7 H6 M9 4 L6 7 L9 10" stroke="#777" stroke-width="1.2" fill="none"/></svg>
<div style="left:1210px;top:795px;width:342px;height:428px;background:#fff;"></div>
<div style="left:1238px;top:795px;width:0;height:325px;border-left:1px dotted #9a9a9a;"></div>
<div style="left:1257px;top:1127px;width:0;height:73px;border-left:1px dotted #9a9a9a;"></div>
<div style="left:1276px;top:1143px;width:0;height:12px;border-left:1px dotted #9a9a9a;"></div>
<div style="left:1276px;top:1175px;width:0;height:8px;border-left:1px dotted #9a9a9a;"></div>
<div style="left:1211px;top:795px;width:341px;height:428px;overflow:hidden;">
<svg style="left:23px;top:-0.5px;" width="9" height="9" viewBox="0 0 9 9"><use href="#xplus"/></svg>
<div style="left:32px;top:4px;width:7px;height:0;border-top:1px dotted #9a9a9a;"></div>
<div class="t" style="left:58px;top:-3.5px;line-height:15px;font-size:10.7px;color:#000;">Database Schema and Data Exporter Move</div>
<svg style="left:40px;top:-4px;" width="16" height="16" viewBox="0 0 16 16"><use href="#pfold"/></svg>
<svg style="left:23px;top:15.5px;" width="9" height="9" viewBox="0 0 9 9"><use href="#xplus"/></svg>
<div style="left:32px;top:20px;width:7px;height:0;border-top:1px dotted #9a9a9a;"></div>
<div class="t" style="left:58px;top:12.5px;line-height:15px;font-size:10.7px;color:#000;">Database Schema and Data ExporterMySQL</div>
<svg style="left:40px;top:12px;" width="16" height="16" viewBox="0 0 16 16"><use href="#pfold"/></svg>
<svg style="left:23px;top:31.5px;" width="9" height="9" viewBox="0 0 9 9"><use href="#xplus"/></svg>
<div style="left:32px;top:36px;width:7px;height:0;border-top:1px dotted #9a9a9a;"></div>
<div class="t" style="left:58px;top:28.5px;line-height:15px;font-size:10.7px;color:#000;">File Transfer and Remote Command Execution</div>
<svg style="left:40px;top:28px;" width="16" height="16" viewBox="0 0 16 16"><use href="#pfold"/></svg>
<svg style="left:23px;top:47.5px;" width="9" height="9" viewBox="0 0 9 9"><use href="#xplus"/></svg>
<div style="left:32px;top:52px;width:7px;height:0;border-top:1px dotted #9a9a9a;"></div>
<div class="t" style="left:58px;top:44.5px;line-height:15px;font-size:10.7px;color:#000;">File Transfer and Remote Command Execution</div>
<svg style="left:40px;top:44px;" width="16" height="16" viewBox="0 0 16 16"><use href="#pfold"/></svg>
<svg style="left:23px;top:63.5px;" width="9" height="9" viewBox="0 0 9 9"><use href="#xplus"/></svg>
<div style="left:32px;top:68px;width:7px;height:0;border-top:1px dotted #9a9a9a;"></div>
<div class="t" style="left:58px;top:60.5px;line-height:15px;font-size:10.7px;color:#000;">HelloWorld</div>
<svg style="left:40px;top:60px;" width="16" height="16" viewBox="0 0 16 16"><use href="#pfold"/></svg>
<svg style="left:23px;top:79.5px;" width="9" height="9" viewBox="0 0 9 9"><use href="#xplus"/></svg>
<div style="left:32px;top:84px;width:7px;height:0;border-top:1px dotted #9a9a9a;"></div>
<div class="t" style="left:58px;top:76.5px;line-height:15px;font-size:10.7px;color:#000;">IO</div>
<svg style="left:40px;top:76px;" width="16" height="16" viewBox="0 0 16 16"><use href="#pfold"/></svg>
<svg style="left:23px;top:95.5px;" width="9" height="9" viewBox="0 0 9 9"><use href="#xplus"/></svg>
<div style="left:32px;top:100px;width:7px;height:0;border-top:1px dotted #9a9a9a;"></div>
<div class="t" style="left:58px;top:92.5px;line-height:15px;font-size:10.7px;color:#000;">Multi Server Script Execute</div>
<svg style="left:40px;top:92px;" width="16" height="16" viewBox="0 0 16 16"><use href="#pfold"/></svg>
<svg style="left:23px;top:111.5px;" width="9" height="9" viewBox="0 0 9 9"><use href="#xplus"/></svg>
<div style="left:32px;top:116px;width:7px;height:0;border-top:1px dotted #9a9a9a;"></div>
<div class="t" style="left:58px;top:108.5px;line-height:15px;font-size:10.7px;color:#000;">Multi Server Script Execute</div>
<svg style="left:40px;top:108px;" width="16" height="16" viewBox="0 0 16 16"><use href="#pfold"/></svg>
<svg style="left:23px;top:127.5px;" width="9" height="9" viewBox="0 0 9 9"><use href="#xplus"/></svg>
<div style="left:32px;top:132px;width:7px;height:0;border-top:1px dotted #9a9a9a;"></div>
<div class="t" style="left:58px;top:124.5px;line-height:15px;font-size:10.7px;color:#000;">Multi Server Script Execute</div>
<svg style="left:40px;top:124px;" width="16" height="16" viewBox="0 0 16 16"><use href="#pfold"/></svg>
<svg style="left:23px;top:143.5px;" width="9" height="9" viewBox="0 0 9 9"><use href="#xplus"/></svg>
<div style="left:32px;top:148px;width:7px;height:0;border-top:1px dotted #9a9a9a;"></div>
<div class="t" style="left:58px;top:140.5px;line-height:15px;font-size:10.7px;color:#000;">Projects</div>
<svg style="left:40px;top:140px;" width="16" height="16" viewBox="0 0 16 16"><use href="#pfold"/></svg>
<svg style="left:23px;top:159.5px;" width="9" height="9" viewBox="0 0 9 9"><use href="#xplus"/></svg>
<div style="left:32px;top:164px;width:7px;height:0;border-top:1px dotted #9a9a9a;"></div>
<div class="t" style="left:58px;top:156.5px;line-height:15px;font-size:10.7px;color:#000;">Random Table And Data Generation</div>
<svg style="left:40px;top:156px;" width="16" height="16" viewBox="0 0 16 16"><use href="#pfold"/></svg>
<svg style="left:23px;top:175.5px;" width="9" height="9" viewBox="0 0 9 9"><use href="#xplus"/></svg>
<div style="left:32px;top:180px;width:7px;height:0;border-top:1px dotted #9a9a9a;"></div>
<div class="t" style="left:58px;top:172.5px;line-height:15px;font-size:10.7px;color:#000;">Random Table And Data Generation</div>
<svg style="left:40px;top:172px;" width="16" height="16" viewBox="0 0 16 16"><use href="#pfold"/></svg>
<svg style="left:23px;top:191.5px;" width="9" height="9" viewBox="0 0 9 9"><use href="#xplus"/></svg>
<div style="left:32px;top:196px;width:7px;height:0;border-top:1px dotted #9a9a9a;"></div>
<div class="t" style="left:58px;top:188.5px;line-height:15px;font-size:10.7px;color:#000;">Random Table And Data Generation</div>
<svg style="left:40px;top:188px;" width="16" height="16" viewBox="0 0 16 16"><use href="#pfold"/></svg>
<svg style="left:23px;top:207.5px;" width="9" height="9" viewBox="0 0 9 9"><use href="#xplus"/></svg>
<div style="left:32px;top:212px;width:7px;height:0;border-top:1px dotted #9a9a9a;"></div>
<div class="t" style="left:58px;top:204.5px;line-height:15px;font-size:10.7px;color:#000;">Random Table And Data Generation Test</div>
<svg style="left:40px;top:204px;" width="16" height="16" viewBox="0 0 16 16"><use href="#pfold"/></svg>
<svg style="left:23px;top:223.5px;" width="9" height="9" viewBox="0 0 9 9"><use href="#xplus"/></svg>
<div style="left:32px;top:228px;width:7px;height:0;border-top:1px dotted #9a9a9a;"></div>
<div class="t" style="left:58px;top:220.5px;line-height:15px;font-size:10.7px;color:#000;">Random Table And Data Generationzzz</div>
<svg style="left:40px;top:220px;" width="16" height="16" viewBox="0 0 16 16"><use href="#pfold"/></svg>
<svg style="left:23px;top:239.5px;" width="9" height="9" viewBox="0 0 9 9"><use href="#xplus"/></svg>
<div style="left:32px;top:244px;width:7px;height:0;border-top:1px dotted #9a9a9a;"></div>
<div class="t" style="left:58px;top:236.5px;line-height:15px;font-size:10.7px;color:#000;">Schema Compare</div>
<svg style="left:40px;top:236px;" width="16" height="16" viewBox="0 0 16 16"><use href="#pfold"/></svg>
<svg style="left:23px;top:255.5px;" width="9" height="9" viewBox="0 0 9 9"><use href="#xplus"/></svg>
<div style="left:32px;top:260px;width:7px;height:0;border-top:1px dotted #9a9a9a;"></div>
<div class="t" style="left:58px;top:252.5px;line-height:15px;font-size:10.7px;color:#000;">test</div>
<svg style="left:40px;top:252px;" width="16" height="16" viewBox="0 0 16 16"><use href="#pfold"/></svg>
<svg style="left:23px;top:271.5px;" width="9" height="9" viewBox="0 0 9 9"><use href="#xplus"/></svg>
<div style="left:32px;top:276px;width:7px;height:0;border-top:1px dotted #9a9a9a;"></div>
<div class="t" style="left:58px;top:268.5px;line-height:15px;font-size:10.7px;color:#000;">Test</div>
<svg style="left:40px;top:268px;" width="16" height="16" viewBox="0 0 16 16"><use href="#pfold"/></svg>
<svg style="left:23px;top:287.5px;" width="9" height="9" viewBox="0 0 9 9"><use href="#xplus"/></svg>
<div style="left:32px;top:292px;width:7px;height:0;border-top:1px dotted #9a9a9a;"></div>
<div class="t" style="left:58px;top:284.5px;line-height:15px;font-size:10.7px;color:#000;">Test1</div>
<svg style="left:40px;top:284px;" width="16" height="16" viewBox="0 0 16 16"><use href="#pfold"/></svg>
<svg style="left:23px;top:303.5px;" width="9" height="9" viewBox="0 0 9 9"><use href="#xplus"/></svg>
<div style="left:32px;top:308px;width:7px;height:0;border-top:1px dotted #9a9a9a;"></div>
<div class="t" style="left:58px;top:300.5px;line-height:15px;font-size:10.7px;color:#000;">testaqua</div>
<svg style="left:40px;top:300px;" width="16" height="16" viewBox="0 0 16 16"><use href="#pfold"/></svg>
<svg style="left:23px;top:319.5px;" width="9" height="9" viewBox="0 0 9 9"><use href="#xminus"/></svg>
<div style="left:32px;top:324px;width:7px;height:0;border-top:1px dotted #9a9a9a;"></div>
<div class="t" style="left:58px;top:316.5px;line-height:15px;font-size:10.7px;color:#000;">testaquascript</div>
<svg style="left:40px;top:316px;" width="16" height="16" viewBox="0 0 16 16"><use href="#pfoldo"/></svg>
<svg style="left:42px;top:335.5px;" width="9" height="9" viewBox="0 0 9 9"><use href="#xminus"/></svg>
<div style="left:51px;top:340px;width:7px;height:0;border-top:1px dotted #9a9a9a;"></div>
<div class="t" style="left:77px;top:332.5px;line-height:15px;font-size:10.7px;color:#000;">AquaScripts</div>
<svg style="left:59px;top:332px;" width="16" height="16" viewBox="0 0 16 16"><use href="#afold"/></svg>
<div style="left:94px;top:349px;width:92px;height:15px;background:#d9d9d9;"></div>
<div class="t" style="left:96px;top:348.5px;line-height:15px;font-size:10.7px;color:#000;">testaquascript.xjs</div>
<svg style="left:78px;top:348px;" width="16" height="16" viewBox="0 0 16 16"><use href="#xjs"/></svg>
<svg style="left:42px;top:367.5px;" width="9" height="9" viewBox="0 0 9 9"><use href="#xminus"/></svg>
<div style="left:51px;top:372px;width:7px;height:0;border-top:1px dotted #9a9a9a;"></div>
<div class="t" style="left:77px;top:364.5px;line-height:15px;font-size:10.7px;color:#000;">Servers</div>
<svg style="left:59px;top:364px;" width="16" height="16" viewBox="0 0 16 16"><use href="#afold"/></svg>
<svg style="left:61px;top:383.5px;" width="9" height="9" viewBox="0 0 9 9"><use href="#xplus"/></svg>
<div style="left:70px;top:388px;width:7px;height:0;border-top:1px dotted #9a9a9a;"></div>
<div class="t" style="left:96px;top:380.5px;line-height:15px;font-size:10.7px;color:#000;">DB2 LUW  172.24.1.199 v11.5</div>
<svg style="left:78px;top:380px;" width="16" height="16" viewBox="0 0 16 16"><use href="#srvg"/></svg>
<svg style="left:42px;top:399.5px;" width="9" height="9" viewBox="0 0 9 9"><use href="#xplus"/></svg>
<div style="left:51px;top:404px;width:7px;height:0;border-top:1px dotted #9a9a9a;"></div>
<div class="t" style="left:77px;top:396.5px;line-height:15px;font-size:10.7px;color:#000;">User Files</div>
<svg style="left:59px;top:396px;" width="16" height="16" viewBox="0 0 16 16"><use href="#afold"/></svg>
<svg style="left:23px;top:415.5px;" width="9" height="9" viewBox="0 0 9 9"><use href="#xplus"/></svg>
<div style="left:32px;top:420px;width:7px;height:0;border-top:1px dotted #9a9a9a;"></div>
<div class="t" style="left:58px;top:412.5px;line-height:15px;font-size:10.7px;color:#000;">TomTest</div>
<svg style="left:40px;top:412px;" width="16" height="16" viewBox="0 0 16 16"><use href="#pfold"/></svg>
</div>
<svg style="left:1289px;top:1143px" width="16" height="16"><path d="M3 1 H10 L13 4 V15 H3 Z" fill="#fff" stroke="#888"/><rect x="4" y="7" width="9" height="6" fill="#e8703a"/><text x="8.5" y="12" font-size="5" text-anchor="middle" fill="#fff" font-family="Liberation Sans">AS</text></svg>
<div style="left:1276px;top:1151px;width:11px;height:0;border-top:1px dotted #9a9a9a;"></div>
<div style="left:1552px;top:795px;width:16px;height:428px;background:#f0f0f0;"></div>
<div style="left:1553px;top:921px;width:14px;height:285px;background:#cdcdcd;"></div>
<svg style="left:1555px;top:800px;" width="10" height="7" viewBox="0 0 10 7"><path d="M1 6 L5 2 L9 6" stroke="#555" stroke-width="1.6" fill="none"/></svg>
<svg style="left:1555px;top:1210px;" width="10" height="7" viewBox="0 0 10 7"><path d="M1 1 L5 5 L9 1" stroke="#555" stroke-width="1.6" fill="none"/></svg>
<div style="left:1189px;top:1223px;width:1326px;height:22px;background:#f0f0f0;border-top:1px solid #a8a8a8;border-bottom:1px solid #a8a8a8;box-sizing:border-box;"></div>
<svg style="left:1221px;top:1227px;" width="14" height="14" viewBox="0 0 14 14"><rect x="1" y="2" width="12" height="11" fill="#fff" stroke="#aaa"/><rect x="1" y="2" width="12" height="3" fill="#7ab8e8"/><path d="M1 7h12M1 10h12M5 5v8M9 5v8" stroke="#bbb"/></svg>
<div class="t" style="left:1238px;top:1226.5px;line-height:15px;font-size:11px;color:#000;">F5: Detail</div>
<div style="left:1189px;top:1245px;width:1326px;height:20px;background:#f0f0f0;border-bottom:1px solid #c8c8c8;box-sizing:border-box;"></div>
<div class="t" style="left:1203px;top:1247.0px;line-height:15px;font-size:10.8px;color:#000;">Local Database Servers / IAWS / DB2 LUW  172.24.1.199 v11.5</div>
<div style="left:2384px;top:1246px;width:48px;height:18px;background:#dedede;border:1px solid #9a9a9a;box-sizing:border-box;"></div>
<div style="left:2385px;top:1247px;width:17px;height:16px;background:#b4b4b4;"></div>
<div class="t" style="left:2435px;top:1247.0px;line-height:15px;font-size:10.8px;color:#000;">377 : 978 : 4,053</div>
<div style="left:1569px;top:318px;width:946px;height:23px;background:#f0f0f0;border-top:1px solid #a0a0a0;box-sizing:border-box;"></div>
<div style="left:1569px;top:321px;width:946px;height:1px;background:#a0a0a0;"></div>
<div class="t" style="left:1575px;top:323.5px;line-height:15px;font-size:11px;color:#000;">titled 45]</div>
<div class="t" style="left:1336px;width:600px;text-align:center;top:323.5px;line-height:15px;font-size:11px;color:#000;font-weight:bold;">✕</div>
<div style="left:1647px;top:323px;width:1px;height:16px;background:#a0a0a0;"></div>
<svg style="left:1653px;top:323px;" width="16" height="16" viewBox="0 0 16 16"><path d="M2 2 H9 V14 H2 Z" fill="#fff" stroke="#5a7aa8"/><path d="M7 5 H14 V14 H7 Z" fill="#fff" stroke="#5a7aa8"/><path d="M9 8h4M9 10h4" stroke="#5a7aa8"/></svg>
<div class="t" style="left:1672px;top:323.5px;line-height:15px;font-size:11px;color:#000;">Database Schema and Data Exporter_Test [Test.xjs]</div>
<div class="t" style="left:1642px;width:600px;text-align:center;top:323.5px;line-height:15px;font-size:11px;color:#000;font-weight:bold;">✕</div>
<div style="left:1954px;top:322px;width:319px;height:19px;background:#a6d0ff;"></div>
<svg style="left:1959px;top:323px;" width="16" height="16" viewBox="0 0 16 16"><rect x="1" y="1" width="14" height="12" fill="#fff" stroke="#5a7aa8"/><rect x="1" y="1" width="14" height="3" fill="#5a7aa8"/><circle cx="6" cy="11" r="3.5" fill="#f0b020"/><circle cx="11" cy="11" r="3" fill="none" stroke="#555"/></svg>
<div class="t" style="left:1978px;top:323.5px;line-height:15px;font-size:11px;color:#000;">db2admin@DB2 LUW  172.24.1.199 v11.5 [Untitled 46]*</div>
<div class="t" style="left:1963px;width:600px;text-align:center;top:323.5px;line-height:15px;font-size:11px;color:#000;font-weight:bold;">✕</div>
<div style="left:2273px;top:321px;width:242px;height:20px;background:#e1e1e1;border-left:1px solid #a0a0a0;box-sizing:border-box;"></div>
<svg style="left:2280px;top:323px;" width="16" height="16" viewBox="0 0 16 16"><path d="M2 2 H9 V14 H2 Z" fill="#fff" stroke="#5a7aa8"/><path d="M7 5 H14 V14 H7 Z" fill="#fff" stroke="#5a7aa8"/><path d="M9 8h4M9 10h4" stroke="#5a7aa8"/></svg>
<div class="t" style="left:2299px;top:322.5px;line-height:17px;font-size:12.2px;color:#000;font-weight:bold;">testaquascript [testaquascript.xjs]</div>
<div class="t" style="left:2212px;width:600px;text-align:center;top:323.5px;line-height:15px;font-size:11px;color:#000;font-weight:bold;">✕</div>
<div style="left:1569px;top:341px;width:946px;height:25px;background:#f0f0f0;border-top:1px solid #b8b8b8;border-bottom:1px solid #b8b8b8;box-sizing:border-box;"></div>
<div style="left:1569px;top:341px;width:6px;height:552px;background:#f0f0f0;border-left:1px solid #a8a8a8;box-sizing:border-box;"></div>
<svg style="left:1577px;top:346px;" width="16" height="16" viewBox="0 0 16 16"><path d="M4 2 L13 8 L4 14 Z" fill="#1aa64a"/></svg>
<svg style="left:1599px;top:346px;" width="16" height="16" viewBox="0 0 16 16"><circle cx="6" cy="8" r="4.5" fill="none" stroke="#555" stroke-width="2" stroke-dasharray="2 1"/><path d="M9 3 L15 8 L9 13 Z" fill="#1aa64a"/></svg>
<svg style="left:1622px;top:346px;" width="16" height="16" viewBox="0 0 16 16"><path d="M1 3 L8 8 L1 13 Z" fill="#1aa64a"/><circle cx="10" cy="9" r="5" fill="#3a8ad8"/><path d="M7 8 Q10 5 13 8 L11 12 Z" fill="#4c4"/></svg>
<div style="left:1643px;top:344px;width:1px;height:20px;background:#b0b0b0;"></div>
<svg style="left:1648px;top:346px;" width="16" height="16" viewBox="0 0 16 16"><path d="M2 2 V14 M5 2 L13 8 L5 14 Z" stroke="#888" fill="#aaa" stroke-width="1.5"/></svg>
<svg style="left:1670px;top:346px;" width="16" height="16" viewBox="0 0 16 16"><rect x="2" y="2" width="12" height="12" fill="#8a8a8a"/></svg>
<svg style="left:1693px;top:346px;" width="16" height="16" viewBox="0 0 16 16"><rect x="3" y="2" width="4" height="12" fill="#8a8a8a"/><rect x="9" y="2" width="4" height="12" fill="#8a8a8a"/></svg>
<div style="left:1714px;top:344px;width:1px;height:20px;background:#b0b0b0;"></div>
<svg style="left:1719px;top:346px;" width="16" height="16" viewBox="0 0 16 16"><path d="M2 4 H9 V11 M6 8 L9 11 L12 8" stroke="#e0a020" stroke-width="2" fill="none"/><path d="M3 14h3M10 14h4" stroke="#2a5ac0" stroke-width="2"/></svg>
<svg style="left:1742px;top:346px;" width="16" height="16" viewBox="0 0 16 16"><path d="M3 10 Q3 3 8 3 Q13 3 13 9 M10 7 L13 10 L15 6" stroke="#e0a020" stroke-width="2" fill="none"/><path d="M6 14h3" stroke="#2a5ac0" stroke-width="2"/></svg>
<svg style="left:1764px;top:346px;" width="16" height="16" viewBox="0 0 16 16"><path d="M3 13h3M9 13 V6 H13 M11 4 L14 6 L11 8" stroke="#999" stroke-width="2" fill="none"/></svg>
<div style="left:1785px;top:344px;width:1px;height:20px;background:#b0b0b0;"></div>
<svg style="left:1790px;top:346px;" width="16" height="16" viewBox="0 0 16 16"><circle cx="8" cy="8" r="6" fill="#e83030"/><circle cx="6" cy="6" r="2" fill="#f88"/></svg>
<div style="left:1812px;top:344px;width:1px;height:20px;background:#b0b0b0;"></div>
<svg style="left:1839px;top:346px;" width="16" height="16" viewBox="0 0 16 16"><rect x="2" y="2" width="12" height="12" fill="#3a7ac8"/><rect x="4" y="3" width="8" height="4" fill="#fff"/><rect x="5" y="10" width="6" height="4" fill="#fff"/></svg>
<svg style="left:1860px;top:346px;" width="16" height="16" viewBox="0 0 16 16"><rect x="2" y="2" width="12" height="12" fill="#3a7ac8"/><rect x="4" y="3" width="8" height="4" fill="#fff"/><rect x="5" y="10" width="6" height="4" fill="#fff"/></svg>
<div style="left:1882px;top:344px;width:1px;height:20px;background:#b0b0b0;"></div>
<svg style="left:1887px;top:346px;" width="16" height="16" viewBox="0 0 16 16"><rect x="1" y="6" width="14" height="7" fill="#3a7ac8"/><rect x="4" y="2" width="8" height="4" fill="#fff" stroke="#666"/><rect x="5" y="10" width="6" height="5" fill="#fff" stroke="#666"/></svg>
<div style="left:1909px;top:344px;width:1px;height:20px;background:#b0b0b0;"></div>
<svg style="left:1914px;top:346px;" width="16" height="16" viewBox="0 0 16 16"><rect x="2" y="2" width="11" height="11" fill="none" stroke="#3a7ac8" stroke-dasharray="2 1.5"/><path d="M9 8 L14 14 L10 13 Z" fill="#888"/></svg>
<svg style="left:1936px;top:346px;" width="16" height="16" viewBox="0 0 16 16"><path d="M4 1 L9 11 M12 1 L7 11" stroke="#888" stroke-width="1.5"/><circle cx="5" cy="13" r="2.2" fill="none" stroke="#3a7ac8" stroke-width="1.4"/><circle cx="11" cy="13" r="2.2" fill="none" stroke="#3a7ac8" stroke-width="1.4"/></svg>
<svg style="left:1958px;top:346px;" width="16" height="16" viewBox="0 0 16 16"><path d="M2 1 H8 L10 3 V11 H2 Z" fill="#fff" stroke="#888"/><path d="M6 5 H12 L14 7 V15 H6 Z" fill="#fff" stroke="#888"/></svg>
<svg style="left:1980px;top:346px;" width="16" height="16" viewBox="0 0 16 16"><rect x="2" y="3" width="9" height="11" fill="#c8a060"/><path d="M7 6 H12 L14 8 V15 H7 Z" fill="#fff" stroke="#888"/></svg>
<svg style="left:2002px;top:346px;" width="16" height="16" viewBox="0 0 16 16"><path d="M4 6 H10 A4 4 0 0 1 10 14 H6 M6 3 L3 6 L6 9" stroke="#8a6ac8" stroke-width="2" fill="none"/></svg>
<svg style="left:2024px;top:346px;" width="16" height="16" viewBox="0 0 16 16"><path d="M12 6 H6 A4 4 0 0 0 6 14 H10 M10 3 L13 6 L10 9" stroke="#8a6ac8" stroke-width="2" fill="none"/></svg>
<div style="left:2045px;top:344px;width:1px;height:20px;background:#b0b0b0;"></div>
<svg style="left:2051px;top:346px;" width="16" height="16" viewBox="0 0 16 16"><rect x="1" y="3" width="10" height="10" fill="#fff" stroke="#aaa"/><circle cx="9" cy="9" r="3.5" fill="#dde" stroke="#888"/><path d="M11.5 11.5 L15 15" stroke="#888" stroke-width="1.5"/></svg>
<svg style="left:2073px;top:346px;" width="16" height="16" viewBox="0 0 16 16"><rect x="1" y="3" width="10" height="10" fill="#fff" stroke="#aaa"/><circle cx="9" cy="9" r="3.5" fill="#dde" stroke="#888"/><path d="M11.5 11.5 L15 15" stroke="#888" stroke-width="1.5"/></svg>
<div style="left:2094px;top:344px;width:1px;height:20px;background:#b0b0b0;"></div>
<svg style="left:2098px;top:346px;" width="16" height="16" viewBox="0 0 16 16"><text x="6" y="13" font-size="10" font-family="Liberation Sans" fill="#333">a</text><path d="M11 2 L15 2 L13 4 Z" fill="#3a7ac8"/></svg>
<svg style="left:2121px;top:346px;" width="16" height="16" viewBox="0 0 16 16"><text x="3" y="14" font-size="12" font-family="Liberation Sans" fill="#333">A</text><path d="M11 4 L15 4 L13 2 Z" fill="#3a7ac8"/></svg>
<div style="left:2143px;top:344px;width:1px;height:20px;background:#b0b0b0;"></div>
<svg style="left:2149px;top:346px;" width="16" height="16" viewBox="0 0 16 16"><rect x="1" y="6" width="10" height="9" fill="#fff" stroke="#5a8a5a"/><circle cx="11" cy="5" r="4.5" fill="#fff" stroke="#3a8a5a" stroke-width="1.4"/></svg>
<div style="left:2171px;top:344px;width:1px;height:20px;background:#b0b0b0;"></div>
<svg style="left:2176px;top:346px;" width="16" height="16" viewBox="0 0 16 16"><rect x="1" y="1" width="14" height="14" fill="#fff" stroke="#3a7ac8"/><path d="M3 5h3M8 5h5M3 10h3M8 10h5" stroke="#3a7ac8" stroke-width="1.5"/></svg>
<div style="left:1575px;top:366px;width:940px;height:527px;background:#fff;"></div>
<div style="left:1575px;top:366px;width:54px;height:527px;background:#efefef;border-right:1px solid #d4d4d4;box-sizing:border-box;"></div>
<div style="left:1576px;top:485px;width:939px;height:17px;background:#fefee0;"></div>
<div style="left:2195px;top:366px;width:1px;height:527px;background:#dadada;"></div>
<div class="t" style="left:995px;width:600px;text-align:right;top:367.5px;line-height:17px;font-size:11.67px;color:#800000;font-family:'Liberation Mono', monospace;">1</div>
<div class="t" style="left:1635.5px;top:367.5px;line-height:17px;font-size:11.67px;font-family:'Liberation Mono', monospace;"><span style="color:#8c8c8c">// specify connection</span></div>
<div class="t" style="left:995px;width:600px;text-align:right;top:384.5px;line-height:17px;font-size:11.67px;color:#800000;font-family:'Liberation Mono', monospace;">2</div>
<div class="t" style="left:1635.5px;top:384.5px;line-height:17px;font-size:11.67px;font-family:'Liberation Mono', monospace;"><span style="color:#0000ff">var</span><span style="color:#000"> </span><span style="color:#008000">conn</span><span style="color:#000"> = </span><span style="color:#008000">aqua</span><span style="color:#000">.project.getServerConnection(</span><span style="color:#c87a00">&quot;DB2 LUW 172.24.1.199 v11.5&quot;</span><span style="color:#000">);</span></div>
<div class="t" style="left:995px;width:600px;text-align:right;top:401.5px;line-height:17px;font-size:11.67px;color:#800000;font-family:'Liberation Mono', monospace;">3</div>
<div class="t" style="left:1635.5px;top:401.5px;line-height:17px;font-size:11.67px;font-family:'Liberation Mono', monospace;"><span style="color:#008000">conn</span><span style="color:#000">.connect();</span></div>
<div class="t" style="left:995px;width:600px;text-align:right;top:418.5px;line-height:17px;font-size:11.67px;color:#800000;font-family:'Liberation Mono', monospace;">4</div>
<div class="t" style="left:1635.5px;top:418.5px;line-height:17px;font-size:11.67px;font-family:'Liberation Mono', monospace;"><span style="color:#008000">conn</span><span style="color:#000">.changeDatabase(</span><span style="color:#c87a00">&#x27;SAMPLE&#x27;</span><span style="color:#000">);</span></div>
<div class="t" style="left:995px;width:600px;text-align:right;top:435.5px;line-height:17px;font-size:11.67px;color:#800000;font-family:'Liberation Mono', monospace;">5</div>
<div class="t" style="left:995px;width:600px;text-align:right;top:452.5px;line-height:17px;font-size:11.67px;color:#800000;font-family:'Liberation Mono', monospace;">6</div>
<div class="t" style="left:1635.5px;top:452.5px;line-height:17px;font-size:11.67px;font-family:'Liberation Mono', monospace;"><span style="color:#8c8c8c">// save as xml</span></div>
<div class="t" style="left:995px;width:600px;text-align:right;top:469.5px;line-height:17px;font-size:11.67px;color:#800000;font-family:'Liberation Mono', monospace;">7</div>
<div class="t" style="left:1635.5px;top:469.5px;line-height:17px;font-size:11.67px;font-family:'Liberation Mono', monospace;"><span style="color:#0000ff">var</span><span style="color:#000"> </span><span style="color:#008000">writer</span><span style="color:#000"> = </span><span style="color:#008000">aqua</span><span style="color:#000">.io.newXmlWriter();</span></div>
<div class="t" style="left:995px;width:600px;text-align:right;top:486.5px;line-height:17px;font-size:11.67px;color:#800000;font-family:'Liberation Mono', monospace;">8</div>
<div class="t" style="left:1635.5px;top:486.5px;line-height:17px;font-size:11.67px;font-family:'Liberation Mono', monospace;"><span style="color:#008000">writer</span><span style="color:#000">.setFile(</span><span style="color:#c87a00">&#x27;C:\\Users\\tom\\Stuff\\tom.xlsx&#x27;</span><span style="color:#000">);</span></div>
<div class="t" style="left:995px;width:600px;text-align:right;top:503.5px;line-height:17px;font-size:11.67px;color:#800000;font-family:'Liberation Mono', monospace;">9</div>
<div class="t" style="left:1635.5px;top:503.5px;line-height:17px;font-size:11.67px;font-family:'Liberation Mono', monospace;"><span style="color:#008000">writer</span><span style="color:#000">.setEncoding(</span><span style="color:#c87a00">&#x27;UTF-8&#x27;</span><span style="color:#000">);</span></div>
<div class="t" style="left:995px;width:600px;text-align:right;top:520.5px;line-height:17px;font-size:11.67px;color:#800000;font-family:'Liberation Mono', monospace;">10</div>
<div class="t" style="left:1635.5px;top:520.5px;line-height:17px;font-size:11.67px;font-family:'Liberation Mono', monospace;"><span style="color:#008000">writer</span><span style="color:#000">.setQuoteIdentifier(</span><span style="color:#c87a00">&#x27;</span><span style="color:#000">\&quot;</span><span style="color:#c87a00">&#x27;</span><span style="color:#000">);</span></div>
<div class="t" style="left:995px;width:600px;text-align:right;top:537.5px;line-height:17px;font-size:11.67px;color:#800000;font-family:'Liberation Mono', monospace;">11</div>
<div class="t" style="left:1635.5px;top:537.5px;line-height:17px;font-size:11.67px;font-family:'Liberation Mono', monospace;"><span style="color:#008000">writer</span><span style="color:#000">.setNullString(</span><span style="color:#c87a00">&#x27;(null)&#x27;</span><span style="color:#000">);</span></div>
<div class="t" style="left:995px;width:600px;text-align:right;top:554.5px;line-height:17px;font-size:11.67px;color:#800000;font-family:'Liberation Mono', monospace;">12</div>
<div class="t" style="left:995px;width:600px;text-align:right;top:571.5px;line-height:17px;font-size:11.67px;color:#800000;font-family:'Liberation Mono', monospace;">13</div>
<div class="t" style="left:1635.5px;top:571.5px;line-height:17px;font-size:11.67px;font-family:'Liberation Mono', monospace;"><span style="color:#0000ff">var</span><span style="color:#000"> </span><span style="color:#008000">query</span><span style="color:#000"> = </span><span style="color:#0000ff">null</span><span style="color:#000">;</span></div>
<div class="t" style="left:995px;width:600px;text-align:right;top:588.5px;line-height:17px;font-size:11.67px;color:#800000;font-family:'Liberation Mono', monospace;">14</div>
<div class="t" style="left:1635.5px;top:588.5px;line-height:17px;font-size:11.67px;font-family:'Liberation Mono', monospace;"><span style="color:#0000ff">var</span><span style="color:#000"> </span><span style="color:#008000">dataSet</span><span style="color:#000"> = </span><span style="color:#0000ff">null</span><span style="color:#000">;</span></div>
<div class="t" style="left:995px;width:600px;text-align:right;top:605.5px;line-height:17px;font-size:11.67px;color:#800000;font-family:'Liberation Mono', monospace;">15</div>
<div class="t" style="left:995px;width:600px;text-align:right;top:622.5px;line-height:17px;font-size:11.67px;color:#800000;font-family:'Liberation Mono', monospace;">16</div>
<div class="t" style="left:1635.5px;top:622.5px;line-height:17px;font-size:11.67px;font-family:'Liberation Mono', monospace;"><span style="color:#8c8c8c">// execute query 1</span></div>
<div class="t" style="left:995px;width:600px;text-align:right;top:639.5px;line-height:17px;font-size:11.67px;color:#800000;font-family:'Liberation Mono', monospace;">17</div>
<div class="t" style="left:1635.5px;top:639.5px;line-height:17px;font-size:11.67px;font-family:'Liberation Mono', monospace;"><span style="color:#008000">query</span><span style="color:#000"> = </span><span style="color:#c87a00">&#x27;SELECT * FROM </span><span style="color:#000">\&quot;</span><span style="color:#c87a00">TOM</span><span style="color:#000">\&quot;</span><span style="color:#c87a00">.</span><span style="color:#000">\&quot;</span><span style="color:#c87a00">WorldPopulation</span><span style="color:#000">\&quot;</span><span style="color:#c87a00">&#x27;</span><span style="color:#000">;</span></div>
<div class="t" style="left:995px;width:600px;text-align:right;top:656.5px;line-height:17px;font-size:11.67px;color:#800000;font-family:'Liberation Mono', monospace;">18</div>
<div class="t" style="left:1635.5px;top:656.5px;line-height:17px;font-size:11.67px;font-family:'Liberation Mono', monospace;"><span style="color:#008000">dataSet</span><span style="color:#000"> = </span><span style="color:#008000">conn</span><span style="color:#000">.executeSnapshot(</span><span style="color:#008000">query</span><span style="color:#000">);</span></div>
<div class="t" style="left:995px;width:600px;text-align:right;top:673.5px;line-height:17px;font-size:11.67px;color:#800000;font-family:'Liberation Mono', monospace;">19</div>
<div class="t" style="left:1635.5px;top:673.5px;line-height:17px;font-size:11.67px;font-family:'Liberation Mono', monospace;"><span style="color:#008000">writer</span><span style="color:#000">.write(</span><span style="color:#008000">dataSet</span><span style="color:#000">);</span></div>
<div class="t" style="left:995px;width:600px;text-align:right;top:690.5px;line-height:17px;font-size:11.67px;color:#800000;font-family:'Liberation Mono', monospace;">20</div>
<div class="t" style="left:995px;width:600px;text-align:right;top:707.5px;line-height:17px;font-size:11.67px;color:#800000;font-family:'Liberation Mono', monospace;">21</div>
<div class="t" style="left:1635.5px;top:707.5px;line-height:17px;font-size:11.67px;font-family:'Liberation Mono', monospace;"><span style="color:#008000">writer</span><span style="color:#000">.close();</span></div>
<div class="t" style="left:995px;width:600px;text-align:right;top:724.5px;line-height:17px;font-size:11.67px;color:#800000;font-family:'Liberation Mono', monospace;">22</div>
<div class="t" style="left:995px;width:600px;text-align:right;top:741.5px;line-height:17px;font-size:11.67px;color:#800000;font-family:'Liberation Mono', monospace;">23</div>
<div class="t" style="left:1635.5px;top:741.5px;line-height:17px;font-size:11.67px;font-family:'Liberation Mono', monospace;"><span style="color:#8c8c8c">/* uncomment to send the file as email attachment</span></div>
<div class="t" style="left:995px;width:600px;text-align:right;top:758.5px;line-height:17px;font-size:11.67px;color:#800000;font-family:'Liberation Mono', monospace;">24</div>
<div class="t" style="left:1635.5px;top:758.5px;line-height:17px;font-size:11.67px;font-family:'Liberation Mono', monospace;"><span style="color:#8c8c8c">var mail = aqua.mail.newMessage();</span></div>
<div class="t" style="left:995px;width:600px;text-align:right;top:775.5px;line-height:17px;font-size:11.67px;color:#800000;font-family:'Liberation Mono', monospace;">25</div>
<div class="t" style="left:1635.5px;top:775.5px;line-height:17px;font-size:11.67px;font-family:'Liberation Mono', monospace;"><span style="color:#8c8c8c">mail.setFrom(...); // sender</span></div>
<div class="t" style="left:995px;width:600px;text-align:right;top:792.5px;line-height:17px;font-size:11.67px;color:#800000;font-family:'Liberation Mono', monospace;">26</div>
<div class="t" style="left:1635.5px;top:792.5px;line-height:17px;font-size:11.67px;font-family:'Liberation Mono', monospace;"><span style="color:#8c8c8c">mail.addToRecipient(...); // recipient</span></div>
<div class="t" style="left:995px;width:600px;text-align:right;top:809.5px;line-height:17px;font-size:11.67px;color:#800000;font-family:'Liberation Mono', monospace;">27</div>
<div class="t" style="left:1635.5px;top:809.5px;line-height:17px;font-size:11.67px;font-family:'Liberation Mono', monospace;"><span style="color:#8c8c8c">mail.setSubject(...); // subject</span></div>
<div class="t" style="left:995px;width:600px;text-align:right;top:826.5px;line-height:17px;font-size:11.67px;color:#800000;font-family:'Liberation Mono', monospace;">28</div>
<div class="t" style="left:1635.5px;top:826.5px;line-height:17px;font-size:11.67px;font-family:'Liberation Mono', monospace;"><span style="color:#8c8c8c">mail.setText(...); // content</span></div>
<div class="t" style="left:995px;width:600px;text-align:right;top:843.5px;line-height:17px;font-size:11.67px;color:#800000;font-family:'Liberation Mono', monospace;">29</div>
<div class="t" style="left:1635.5px;top:843.5px;line-height:17px;font-size:11.67px;font-family:'Liberation Mono', monospace;"><span style="color:#8c8c8c">mail.addFileAttachment(&#x27;C:\\Users\\tom\\Stuff\\&#x27;);</span></div>
<div class="t" style="left:995px;width:600px;text-align:right;top:860.5px;line-height:17px;font-size:11.67px;color:#800000;font-family:'Liberation Mono', monospace;">30</div>
<div class="t" style="left:1635.5px;top:860.5px;line-height:17px;font-size:11.67px;font-family:'Liberation Mono', monospace;"><span style="color:#8c8c8c">mail.send();</span></div>
<div class="t" style="left:995px;width:600px;text-align:right;top:877.5px;line-height:17px;font-size:11.67px;color:#800000;font-family:'Liberation Mono', monospace;">31</div>
<div class="t" style="left:1635.5px;top:877.5px;line-height:17px;font-size:11.67px;font-family:'Liberation Mono', monospace;"><span style="color:#8c8c8c">*/</span></div>
<div style="left:1569px;top:893px;width:946px;height:23px;background:#f0f0f0;border-top:1px solid #b8b8b8;border-bottom:1px solid #b8b8b8;box-sizing:border-box;"></div>
<div class="t" style="left:2461px;top:897.5px;line-height:15px;font-size:11px;color:#000;">8:48</div>
<div class="t" style="left:2504px;top:897.5px;line-height:15px;font-size:11px;color:#000;">LF</div>
<div style="left:1569px;top:916px;width:946px;height:7px;background:#f0f0f0;"></div>
<div class="t" style="left:1778px;width:600px;text-align:center;top:915.0px;line-height:6px;font-size:6px;color:#999;">∙∙∙∙∙</div>
<div style="left:1569px;top:922px;width:946px;height:301px;background:#f0f0f0;"></div>
<div style="left:1569px;top:943px;width:946px;height:1px;background:#a0a0a0;"></div>
<div style="left:1583px;top:923px;width:78px;height:21px;background:#e2e2e2;border:1px solid #a0a0a0;border-bottom:none;box-sizing:border-box;"></div>
<svg style="left:1590px;top:925px;" width="16" height="16" viewBox="0 0 16 16"><rect x="1" y="2" width="13" height="10" fill="#fff" stroke="#3a7ac8" stroke-width="1.5"/><path d="M4 6h7M4 8h5" stroke="#3a7ac8"/><rect x="4" y="13" width="8" height="2" fill="#3a7ac8"/></svg>
<div class="t" style="left:1608px;top:925.5px;line-height:15px;font-size:11px;color:#000;">Console</div>
<svg style="left:1666px;top:925px;" width="16" height="16" viewBox="0 0 16 16"><circle cx="5" cy="11" r="3.5" fill="none" stroke="#e0a020" stroke-width="1.6"/><circle cx="11" cy="5" r="3.5" fill="none" stroke="#e0a020" stroke-width="1.6"/><path d="M2 2 L5 5 M14 14 L11 11" stroke="#3a7ac8" stroke-width="1.2"/></svg>
<div class="t" style="left:1685px;top:925.5px;line-height:15px;font-size:11px;color:#000;">Debug</div>
<div style="left:1730px;top:925px;width:1px;height:17px;background:#a0a0a0;"></div>
<div class="t" style="left:1577px;top:944.5px;line-height:15px;font-size:11px;color:#000;">Console</div>
<div style="left:1577px;top:959px;width:498px;height:257px;background:#fff;border:1px solid #8a96a8;box-sizing:border-box;"></div>
<div class="t" style="left:2079px;top:944.5px;line-height:15px;font-size:11px;color:#000;">Evaluate</div>
<div style="left:2080px;top:959px;width:440px;height:257px;background:#fff;border:1px solid #8a96a8;box-sizing:border-box;"></div>
<div class="t" style="left:2086px;top:965.5px;line-height:11px;font-size:8px;color:#777;">$</div>
<div style="left:1569px;top:1217px;width:946px;height:1px;background:#a0a0a0;"></div>
<div style="left:1573px;top:341px;width:1px;height:877px;background:#b0b0b0;"></div>
<div style="left:1575px;top:893px;width:1px;height:325px;background:#b8b8b8;"></div>
<div style="left:282px;top:207px;width:112px;height:35px;border:3px solid #e5433e;box-sizing:border-box;"></div>
<div style="left:531px;top:662px;width:107px;height:34px;border:3px solid #e5433e;box-sizing:border-box;"></div>
<div style="left:282px;top:872px;width:113px;height:84px;border:3px solid #e5433e;box-sizing:border-box;"></div>
<div style="left:1745px;top:485px;width:228px;height:19px;border:3px solid #e5433e;box-sizing:border-box;"></div>
<div style="left:1237px;top:1111px;width:246px;height:100px;border:3px solid #e5433e;box-sizing:border-box;"></div>
<svg style="left:0;top:0" width="2515" height="1337"><g filter="url(#shad)"><path d="M411.0 233.5 L442.8 224.7 L439.9 234.1 L1734.0 487.3 L1732.0 497.7 L438.0 243.9 L437.1 253.6 Z" fill="#e84a45"/><circle cx="1733.0" cy="492.5" r="5.2" fill="#e84a45"/><path d="M420.0 936.6 L452.3 930.2 L448.8 939.3 L1215.4 1149.6 L1212.6 1159.8 L446.2 949.0 L444.6 958.6 Z" fill="#e84a45"/><circle cx="1214.0" cy="1154.7" r="5.2" fill="#e84a45"/></g></svg>
</body></html>
